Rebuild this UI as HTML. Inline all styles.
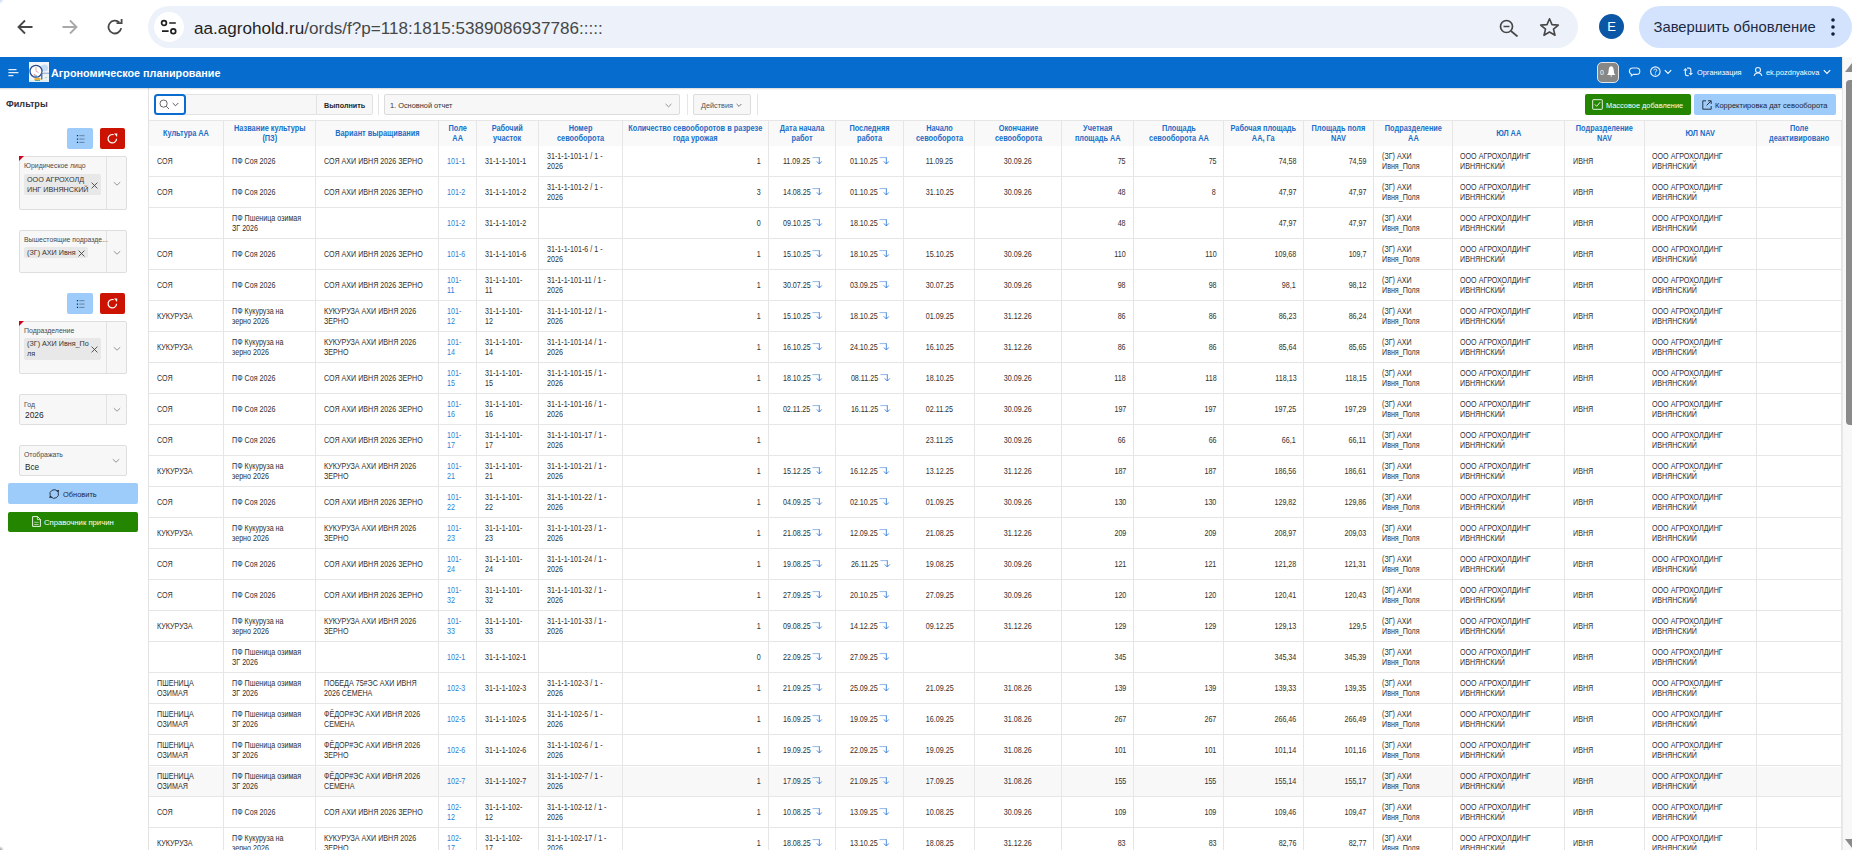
<!DOCTYPE html>
<html><head><meta charset="utf-8"><title>Агрономическое планирование</title>
<style>
*{box-sizing:border-box;margin:0;padding:0}
html,body{width:1852px;height:850px;overflow:hidden;background:#fff;font-family:"Liberation Sans",sans-serif;color:#262626;position:relative}
.abs{position:absolute}
/* browser chrome */
#chrome{position:absolute;left:0;top:0;width:1852px;height:57px;background:#fff}
#omni{position:absolute;left:148px;top:6px;width:1430px;height:42px;border-radius:21px;background:#ecf1fa}
#site{position:absolute;left:154px;top:12px;width:30px;height:30px;border-radius:15px;background:#fff}
#url{position:absolute;left:194px;top:18.3px;font-size:17.1px;line-height:22px;color:#474747;white-space:nowrap}
#url b{font-weight:400;color:#1f1f1f}
#prof{position:absolute;left:1599px;top:14px;width:25px;height:25px;border-radius:13px;background:#0b57a6;color:#fff;font-size:13px;line-height:25px;text-align:center}
#upd{position:absolute;left:1639px;top:6px;width:213px;height:42px;border-radius:21px;background:#d3e3fd}
#updt{position:absolute;left:1653.5px;top:16px;font-size:14.8px;line-height:22px;color:#1b2a45;white-space:nowrap}
/* apex header */
#hdr{position:absolute;left:0;top:57px;width:1842px;height:31px;background:#066ccd}
#title{position:absolute;left:51px;top:66px;font-size:10.8px;font-weight:700;color:#fff;line-height:14px;white-space:nowrap}
.hw{color:#fff;font-size:7.4px;line-height:10px;position:absolute;white-space:nowrap}
/* scrollbar */
#sb{position:absolute;left:1842px;top:57px;width:10px;height:793px;background:#f8f8f8;border-left:1px solid #e8e8e8}
/* left panel */
#lp{position:absolute;left:0;top:88px;width:148.8px;height:762px;background:#fff;border-right:1.5px solid #e2e2e2}
.ftl{position:absolute;left:6px;top:98px;font-size:9.1px;font-weight:700;color:#33303a;line-height:12px}
.btnb{position:absolute;width:26px;height:21px;background:#9dcbfa;border-radius:2px}
.btnr{position:absolute;width:25px;height:21px;background:#cc1200;border-radius:2px}
.sel{position:absolute;left:19px;width:107.5px;background:#f7f7f7;border:1px solid #dedede;border-radius:2px}
.sel .dv{position:absolute;left:86px;top:0;bottom:0;width:1px;background:#e2e2e2}
.lbl{position:absolute;left:4px;margin-top:-0.3px;font-size:6.9px;line-height:8px;color:#4a4a4a;white-space:nowrap}
.chip{position:absolute;left:4px;background:#e8e8e8;border-radius:2px;font-size:7.2px;line-height:9.5px;color:#333;padding:1px 3px;white-space:nowrap}
.req{position:absolute;left:-1px;top:-1px;width:0;height:0;border-top:5px solid #d0011b;border-right:5px solid transparent}
/* main toolbar */
#tb{position:absolute;left:149px;top:88px;width:1693px;height:33px;background:#fff;border-bottom:1px solid #e6e6e6}
/* table */
.thbg{position:absolute;background:#f9f9f9}
.hov{position:absolute;background:#f8f8f8}
.hl{position:absolute;left:149px;width:1692.5px;height:1px;background:#e6e6e6}
.vl{position:absolute;top:121px;width:1px;height:729px;background:#e6e6e6}
.th{position:absolute;display:flex;align-items:center;justify-content:center;text-align:center;font-size:8.6px;line-height:10px;font-weight:700;color:#1a6ec8;padding:0;white-space:nowrap}
.th .t{display:inline-block;transform:scaleX(0.855);transform-origin:center center;position:relative;top:-0.2px}
.td{position:absolute;height:31px;display:flex;align-items:center;font-size:8.6px;line-height:10px;color:#303030;padding:0 8px;white-space:nowrap}
.td .t{display:inline-block;transform:scaleX(0.83);transform-origin:left center;position:relative;top:-0.3px}
.td.r{justify-content:flex-end;text-align:right;padding-right:7.4px}
.td.r .t{transform-origin:right center}
.td.c{justify-content:center;text-align:center}
.td.c .t{transform-origin:center center}
.lnk{color:#2f7fd3}
.ar{margin-left:2px;margin-right:-2px;vertical-align:middle;position:relative;top:-1px}
</style></head>
<body>
<div id="chrome">
<svg class="abs" style="left:17px;top:19px" width="16" height="16" viewBox="0 0 16 16"><path d="M15.5 8H1.8M8 1.5L1.5 8L8 14.5" fill="none" stroke="#474747" stroke-width="1.8"/></svg>
<svg class="abs" style="left:62px;top:19px" width="16" height="16" viewBox="0 0 16 16"><path d="M0.5 8H14.2M8 1.5L14.5 8L8 14.5" fill="none" stroke="#a8a8a8" stroke-width="1.8"/></svg>
<svg class="abs" style="left:107px;top:19px" width="17" height="16" viewBox="0 0 17 16"><path d="M14.2 9.2A6.4 6.4 0 1 1 12.3 3.4" fill="none" stroke="#474747" stroke-width="1.8"/><path d="M9.5 4.2H14.6V-0.5" fill="none" stroke="#474747" stroke-width="1.8"/></svg>
<div id="omni"></div><div id="site"></div>
<svg class="abs" style="left:159px;top:17px" width="18" height="18" viewBox="0 0 18 18"><circle cx="5" cy="6" r="2.4" fill="none" stroke="#1f1f1f" stroke-width="1.7"/><path d="M10.2 6H16.8M3 14.2H9.6" stroke="#1f1f1f" stroke-width="1.7"/><circle cx="14.3" cy="14.2" r="2.4" fill="none" stroke="#1f1f1f" stroke-width="1.7"/></svg>
<div id="url"><b>aa.agrohold.ru</b>/ords/f?p=118:1815:5389086937786:::::</div>
<svg class="abs" style="left:1499px;top:19px" width="20" height="18" viewBox="0 0 20 18"><circle cx="7.5" cy="7.5" r="6" fill="none" stroke="#474747" stroke-width="1.7"/><path d="M4.5 7.5H10.5M12 12L18.5 17.5" stroke="#474747" stroke-width="1.7"/></svg>
<svg class="abs" style="left:1539px;top:17px" width="21" height="20" viewBox="0 0 21 20"><path d="M10.5 1.8L13 7.6L19.3 8.1L14.5 12.2L16 18.3L10.5 15L5 18.3L6.5 12.2L1.7 8.1L8 7.6Z" fill="none" stroke="#474747" stroke-width="1.6" stroke-linejoin="round"/></svg>
<div id="prof">E</div><div id="upd"></div><div id="updt">Завершить обновление</div>
<svg class="abs" style="left:1829px;top:17px" width="8" height="20" viewBox="0 0 8 20"><circle cx="4" cy="3" r="1.8" fill="#0f1f3d"/><circle cx="4" cy="10" r="1.8" fill="#0f1f3d"/><circle cx="4" cy="17" r="1.8" fill="#0f1f3d"/></svg>
</div>
<div id="hdr"></div>
<svg class="abs" style="left:7.5px;top:68px" width="12" height="10" viewBox="0 0 12 10"><path d="M0.4 1.6H8.5M0.4 4.6H10.4M0.4 7.6H5.4" stroke="#e4eefa" stroke-width="1.1"/></svg>
<svg class="abs" style="left:29px;top:62px" width="20" height="20" viewBox="0 0 20 20"><rect width="20" height="20" fill="#f3f7fc"/><circle cx="15.5" cy="6" r="3.6" fill="#c5dcf5"/><rect x="0" y="18" width="20" height="2" fill="#e2ecf4"/><circle cx="7" cy="9.3" r="6" fill="#fff" stroke="#2b4f8c" stroke-width="1.3"/><path d="M7 5V9.3L9.5 10.5" fill="none" stroke="#d9848a" stroke-width="0.7"/><rect x="12.5" y="10.8" width="7.5" height="7.2" fill="#eef3f8"/><path d="M12.5 11.2H20" stroke="#6f8db3" stroke-width="0.8"/><path d="M12.8 11V17.5" stroke="#2b4f8c" stroke-width="1.1"/><path d="M16 16.5L17 15L18 15.8" stroke="#8ec07a" stroke-width="0.6" fill="none"/><ellipse cx="8.5" cy="17.2" rx="3.2" ry="1.6" fill="#e3b23a"/><circle cx="7" cy="14.5" r="1.2" fill="#5b8fd6"/><circle cx="5.5" cy="12.8" r="0.9" fill="#e58f8f"/><path d="M6 18.5H11" stroke="#3aa6a0" stroke-width="0.8"/></svg>
<div id="title">Агрономическое планирование</div>
<div class="abs" style="left:1597px;top:62px;width:22px;height:21px;border-radius:5px;background:#878787;border:1.3px solid #e6e6e6"></div>
<div class="hw" style="left:1600px;top:68px;font-size:7px">0</div>
<svg class="abs" style="left:1606px;top:66px" width="10" height="12" viewBox="0 0 10 12"><path d="M5.2 0.3C6.8 0.3 7.5 1.8 7.7 4L8.1 7.2L9.4 8.9H1L2.3 7.2L2.7 4C2.9 1.8 3.6 0.3 5.2 0.3Z" fill="#fff"/><path d="M5.2 8.8V10.9" stroke="#fff" stroke-width="0.8"/></svg>
<svg class="abs" style="left:1628px;top:67px" width="13" height="10" viewBox="0 0 13 10"><path d="M4.5 1H8.6A3.2 3.2 0 0 1 8.6 7.4H5.2L3.2 9L3.5 7.2A3.2 3.2 0 0 1 4.5 1Z" fill="none" stroke="#e3eefa" stroke-width="1.1" stroke-linejoin="round"/></svg>
<svg class="abs" style="left:1649px;top:66px" width="12" height="12" viewBox="0 0 12 12"><circle cx="6.35" cy="5.6" r="4.75" fill="none" stroke="#e8f1fb" stroke-width="1.1"/><path d="M4.8 4.4C4.8 3.5 5.5 3 6.3 3C7.2 3 7.8 3.5 7.8 4.3C7.8 5.3 6.4 5.4 6.4 6.6" fill="none" stroke="#e8f1fb" stroke-width="1"/><circle cx="6.4" cy="8.1" r="0.65" fill="#e8f1fb"/></svg>
<svg class="abs" style="left:1664px;top:69px" width="8" height="6" viewBox="0 0 8 6"><path d="M0.8 1.2L4 4.4L7.2 1.2" fill="none" stroke="#fff" stroke-width="1.1"/></svg>
<svg class="abs" style="left:1682px;top:67px" width="12" height="10" viewBox="0 0 12 10"><path d="M3.4 2.2V7Q3.4 8.6 5 8.6H6.7M5 1.2H7.2Q8.8 1.2 8.8 2.8V6.4" fill="none" stroke="#dce9f8" stroke-width="1.2"/><path d="M1.2 3.6H5.6L3.4 1.1Z M6.6 5.9H11L8.8 8.4Z" fill="#dce9f8"/></svg>
<div class="hw" style="left:1697px;top:68px">Организация</div>
<svg class="abs" style="left:1753px;top:66px" width="10" height="12" viewBox="0 0 10 12"><circle cx="5" cy="4" r="2.5" fill="none" stroke="#e6effa" stroke-width="1.1"/><path d="M1.2 10C1.6 7.9 3 6.9 5 6.9C7 6.9 8.4 7.9 8.8 10" fill="none" stroke="#e6effa" stroke-width="1.1"/></svg>
<div class="hw" style="left:1766px;top:68px">ek.pozdnyakova</div>
<svg class="abs" style="left:1823px;top:69px" width="8" height="6" viewBox="0 0 8 6"><path d="M0.8 1.2L4 4.4L7.2 1.2" fill="none" stroke="#fff" stroke-width="1.1"/></svg>
<div id="sb"></div>
<svg class="abs" style="left:1844px;top:62px" width="8" height="11" viewBox="0 0 8 11"><path d="M1 10L8 1V10Z" fill="#8a8a8a"/></svg>
<div class="abs" style="left:1846px;top:80px;width:10px;height:345px;background:#8a8a8a;border-radius:4px"></div>
<svg class="abs" style="left:1844px;top:838px" width="8" height="11" viewBox="0 0 8 11"><path d="M1 1L8 10V1Z" fill="#8a8a8a"/></svg>
<div id="lp"></div>
<div class="ftl">Фильтры</div>
<div class="btnb" style="left:67px;top:128px"><svg class="abs" style="left:8.5px;top:6px" width="10" height="10" viewBox="0 0 10 10"><path d="M0.9 1.7H2.1M0.9 5.05H2.1M0.9 8.4H2.1" stroke="#1b2636" stroke-width="1.3"/><path d="M3.3 1.7H8.5M3.3 5.05H8.5M3.3 8.4H8.5" stroke="#5d7a99" stroke-width="0.9"/></svg></div>
<div class="btnr" style="left:100px;top:128px"><svg class="abs" style="left:7px;top:5px" width="11" height="11" viewBox="0 0 11 11"><path d="M9.5 5.7A4.2 4.2 0 1 1 6.74 1.75" fill="none" stroke="#fff" stroke-width="1.2"/><path d="M7.0 0.6L10.3 0.5L10.1 3.9Z" fill="#fff"/></svg></div>
<div class="btnb" style="left:67px;top:293px"><svg class="abs" style="left:8.5px;top:6px" width="10" height="10" viewBox="0 0 10 10"><path d="M0.9 1.7H2.1M0.9 5.05H2.1M0.9 8.4H2.1" stroke="#1b2636" stroke-width="1.3"/><path d="M3.3 1.7H8.5M3.3 5.05H8.5M3.3 8.4H8.5" stroke="#5d7a99" stroke-width="0.9"/></svg></div>
<div class="btnr" style="left:100px;top:293px"><svg class="abs" style="left:7px;top:5px" width="11" height="11" viewBox="0 0 11 11"><path d="M9.5 5.7A4.2 4.2 0 1 1 6.74 1.75" fill="none" stroke="#fff" stroke-width="1.2"/><path d="M7.0 0.6L10.3 0.5L10.1 3.9Z" fill="#fff"/></svg></div>
<div class="sel" style="top:156px;height:54px"><div class="dv"></div><div class="req"></div><div class="lbl" style="top:5px">Юридическое лицо</div><div class="chip" style="top:17px;width:77px;height:21px;padding:0.8px 3px;line-height:9.8px">ООО АГРОХОЛД<br>ИНГ ИВНЯНСКИЙ<svg style="position:absolute;right:3.5px;top:7.5px" width="7" height="7" viewBox="0 0 7 7"><path d="M0.6 0.6L6.4 6.4M6.4 0.6L0.6 6.4" stroke="#444" stroke-width="0.9"/></svg></div><svg class="abs" style="left:92.5px;top:24px" width="8" height="6" viewBox="0 0 8 6"><path d="M0.8 1.2L4 4.2L7.2 1.2" fill="none" stroke="#8a8a8a" stroke-width="0.9"/></svg></div>
<div class="sel" style="top:230px;height:43px"><div class="dv"></div><div class="lbl" style="top:5px">Вышестоящие подразде...</div><div class="chip" style="top:16px;width:64px;height:11px;padding:1.2px 3px 0 3px">(ЗГ) АХИ Ивня<svg style="position:absolute;right:3.5px;top:3px" width="7" height="7" viewBox="0 0 7 7"><path d="M0.6 0.6L6.4 6.4M6.4 0.6L0.6 6.4" stroke="#444" stroke-width="0.9"/></svg></div><svg class="abs" style="left:92.5px;top:19px" width="8" height="6" viewBox="0 0 8 6"><path d="M0.8 1.2L4 4.2L7.2 1.2" fill="none" stroke="#8a8a8a" stroke-width="0.9"/></svg></div>
<div class="sel" style="top:321px;height:53px"><div class="dv"></div><div class="req"></div><div class="lbl" style="top:5px">Подразделение</div><div class="chip" style="top:16px;width:77px;height:22px;padding:1.2px 3px;line-height:10px">(ЗГ) АХИ Ивня_По<br>ля<svg style="position:absolute;right:3.5px;top:7.5px" width="7" height="7" viewBox="0 0 7 7"><path d="M0.6 0.6L6.4 6.4M6.4 0.6L0.6 6.4" stroke="#444" stroke-width="0.9"/></svg></div><svg class="abs" style="left:92.5px;top:24px" width="8" height="6" viewBox="0 0 8 6"><path d="M0.8 1.2L4 4.2L7.2 1.2" fill="none" stroke="#8a8a8a" stroke-width="0.9"/></svg></div>
<div class="sel" style="top:394px;height:31px"><div class="dv"></div><div class="lbl" style="top:6px">Год</div><div class="abs" style="left:5px;top:15px;font-size:8.4px;line-height:10px;color:#262626">2026</div><svg class="abs" style="left:92.5px;top:12px" width="8" height="6" viewBox="0 0 8 6"><path d="M0.8 1.2L4 4.2L7.2 1.2" fill="none" stroke="#8a8a8a" stroke-width="0.9"/></svg></div>
<div class="sel" style="top:445px;height:31px"><div class="lbl" style="top:5px">Отображать</div><div class="abs" style="left:5px;top:16.5px;font-size:8.2px;line-height:10px;color:#262626">Все</div><svg class="abs" style="left:91.5px;top:12px" width="8" height="6" viewBox="0 0 8 6"><path d="M0.8 1.2L4 4.2L7.2 1.2" fill="none" stroke="#8a8a8a" stroke-width="0.9"/></svg></div>
<div class="abs" style="left:8px;top:483px;width:130px;height:21px;background:#9dcbfa;border-radius:2px"></div>
<svg class="abs" style="left:49px;top:488.5px" width="11" height="11" viewBox="0 0 11 11"><path d="M1.16 6.47A4.3 4.3 0 0 1 8.49 2.24M9.24 3.53A4.3 4.3 0 0 1 1.91 7.76" fill="none" stroke="#1d2733" stroke-width="0.9"/><path d="M7.3 1.5L10.1 1.1L9.4 3.9Z M3.1 8.5L0.3 8.9L1.0 6.1Z" fill="#1d2733"/></svg>
<div class="abs" style="left:63px;top:489.8px;font-size:7.45px;line-height:10px;color:#1d2733;white-space:nowrap">Обновить</div>
<div class="abs" style="left:8px;top:512px;width:130px;height:20px;background:#238500;border-radius:2px"></div>
<svg class="abs" style="left:31.5px;top:516px" width="9" height="11" viewBox="0 0 9 11"><path d="M0.6 0.6H5.6L8.4 3.4V10.4H0.6Z" fill="none" stroke="#fff" stroke-width="0.9"/><path d="M5.4 0.6V3.6H8.4" fill="none" stroke="#fff" stroke-width="0.7"/><path d="M2.2 6.3H6.6M2.2 8.5H6.6" fill="none" stroke="#fff" stroke-width="0.6"/></svg>
<div class="abs" style="left:44px;top:518px;font-size:7.7px;line-height:10px;color:#fff;white-space:nowrap">Справочник причин</div>
<div id="tb"></div>
<div class="abs" style="left:185px;top:94px;width:132px;height:20.8px;background:#f7f7f7;border:1px solid #e2e2e2;border-left:none"></div>
<div class="abs" style="left:316px;top:94px;width:57px;height:20.8px;background:#f7f7f7;border:1px solid #e2e2e2;border-radius:0 2px 2px 0"></div>
<div class="abs" style="left:324px;top:100.7px;font-size:7.2px;font-weight:700;line-height:10px;color:#262626;white-space:nowrap">Выполнить</div>
<div class="abs" style="left:154px;top:94.3px;width:32px;height:21px;background:#fff;border:2px solid #0b6cd0;border-radius:3.5px"></div>
<svg class="abs" style="left:159px;top:99px" width="11" height="11" viewBox="0 0 11 11"><circle cx="4.6" cy="4.6" r="3.6" fill="none" stroke="#555" stroke-width="0.9"/><path d="M7.2 7.2L10 10" stroke="#555" stroke-width="0.9"/></svg>
<svg class="abs" style="left:171.5px;top:102px" width="7" height="5" viewBox="0 0 7 5"><path d="M0.7 1L3.5 3.8L6.3 1" fill="none" stroke="#444" stroke-width="0.9"/></svg>
<div class="abs" style="left:378px;top:94px;width:1px;height:21px;background:#e6e6e6"></div>
<div class="abs" style="left:687px;top:94px;width:1px;height:21px;background:#e6e6e6"></div>
<div class="abs" style="left:756.5px;top:94px;width:1px;height:21px;background:#e6e6e6"></div>
<div class="abs" style="left:384px;top:94px;width:295.5px;height:20.8px;background:#f7f7f7;border:1px solid #dcdcdc;border-radius:2px"></div>
<div class="abs" style="left:390px;top:100.7px;font-size:7.38px;line-height:10px;color:#333;white-space:nowrap">1. Основной отчет</div>
<svg class="abs" style="left:665px;top:103px" width="7" height="5" viewBox="0 0 7 5"><path d="M0.6 1L3.5 3.8L6.4 1" fill="none" stroke="#777" stroke-width="0.8"/></svg>
<div class="abs" style="left:693px;top:94px;width:58px;height:20.8px;background:#f7f7f7;border:1px solid #dcdcdc;border-radius:2px"></div>
<div class="abs" style="left:701px;top:100.7px;font-size:7.3px;line-height:10px;color:#555;white-space:nowrap">Действия</div>
<svg class="abs" style="left:735.5px;top:103px" width="6" height="5" viewBox="0 0 6 5"><path d="M0.6 1L3 3.4L5.4 1" fill="none" stroke="#555" stroke-width="0.8"/></svg>
<div class="abs" style="left:1585px;top:94px;width:106px;height:21px;background:#238500;border-radius:2px"></div>
<svg class="abs" style="left:1592px;top:99px" width="11" height="11" viewBox="0 0 11 11"><rect x="0.7" y="0.7" width="9.6" height="9.6" rx="0.5" fill="none" stroke="#fff" stroke-width="0.9"/><path d="M2.8 5.4L4.7 7.3L8.2 3.2" fill="none" stroke="#fff" stroke-width="0.9"/></svg>
<div class="abs" style="left:1606px;top:100.8px;font-size:7.4px;line-height:10px;color:#fff;white-space:nowrap">Массовое добавление</div>
<div class="abs" style="left:1694px;top:94px;width:142px;height:21px;background:#9dcbfa;border-radius:2px"></div>
<svg class="abs" style="left:1702px;top:100px" width="10" height="10" viewBox="0 0 10 10"><path d="M4 0.8H0.8V9.2H9.2V6" fill="none" stroke="#1d2733" stroke-width="0.9"/><path d="M4.6 5.4L9 1M6 0.8H9.2V4" fill="none" stroke="#1d2733" stroke-width="0.9"/></svg>
<div class="abs" style="left:1715px;top:100.8px;font-size:7.53px;line-height:10px;color:#1d2733;white-space:nowrap">Корректировка дат севооборота</div>
<div class="thbg" style="left:149px;top:120.5px;width:1692.5px;height:25.5px"></div>
<div class="hov" style="left:149px;top:766.5px;width:1692.5px;height:30.5px"></div>
<div class="hl" style="top:176.0px"></div>
<div class="hl" style="top:207.0px"></div>
<div class="hl" style="top:238.0px"></div>
<div class="hl" style="top:269.0px"></div>
<div class="hl" style="top:300.0px"></div>
<div class="hl" style="top:331.0px"></div>
<div class="hl" style="top:362.0px"></div>
<div class="hl" style="top:393.0px"></div>
<div class="hl" style="top:424.0px"></div>
<div class="hl" style="top:455.0px"></div>
<div class="hl" style="top:486.0px"></div>
<div class="hl" style="top:517.0px"></div>
<div class="hl" style="top:548.0px"></div>
<div class="hl" style="top:579.0px"></div>
<div class="hl" style="top:610.0px"></div>
<div class="hl" style="top:641.0px"></div>
<div class="hl" style="top:672.0px"></div>
<div class="hl" style="top:703.0px"></div>
<div class="hl" style="top:734.0px"></div>
<div class="hl" style="top:765.0px"></div>
<div class="hl" style="top:796.0px"></div>
<div class="hl" style="top:827.0px"></div>
<div class="hl" style="top:858.0px"></div>
<div class="vl" style="left:223px"></div>
<div class="vl" style="left:315px"></div>
<div class="vl" style="left:438px"></div>
<div class="vl" style="left:476px"></div>
<div class="vl" style="left:538px"></div>
<div class="vl" style="left:622px"></div>
<div class="vl" style="left:768px"></div>
<div class="vl" style="left:835px"></div>
<div class="vl" style="left:903px"></div>
<div class="vl" style="left:974px"></div>
<div class="vl" style="left:1061px"></div>
<div class="vl" style="left:1133px"></div>
<div class="vl" style="left:1223px"></div>
<div class="vl" style="left:1303px"></div>
<div class="vl" style="left:1373px"></div>
<div class="vl" style="left:1452px"></div>
<div class="vl" style="left:1564px"></div>
<div class="vl" style="left:1644px"></div>
<div class="vl" style="left:1756px"></div>
<div class="vl" style="left:1841px"></div>
<div class="th" style="left:149px;width:74.5px;top:120.5px;height:25.5px"><span class="t">Культура АА</span></div>
<div class="th" style="left:223.5px;width:92.0px;top:120.5px;height:25.5px"><span class="t">Название культуры<br>(ПЗ)</span></div>
<div class="th" style="left:315.5px;width:123.0px;top:120.5px;height:25.5px"><span class="t">Вариант выращивания</span></div>
<div class="th" style="left:438.5px;width:38.0px;top:120.5px;height:25.5px"><span class="t">Поле<br>АА</span></div>
<div class="th" style="left:476.5px;width:62.0px;top:120.5px;height:25.5px"><span class="t">Рабочий<br>участок</span></div>
<div class="th" style="left:538.5px;width:83.79999999999995px;top:120.5px;height:25.5px"><span class="t">Номер<br>севооборота</span></div>
<div class="th" style="left:622.3px;width:146.10000000000002px;top:120.5px;height:25.5px"><span class="t">Количество севооборотов в разрезе<br>года урожая</span></div>
<div class="th" style="left:768.4px;width:67.0px;top:120.5px;height:25.5px"><span class="t">Дата начала<br>работ</span></div>
<div class="th" style="left:835.4px;width:68.10000000000002px;top:120.5px;height:25.5px"><span class="t">Последняя<br>работа</span></div>
<div class="th" style="left:903.5px;width:71.5px;top:120.5px;height:25.5px"><span class="t">Начало<br>севооборота</span></div>
<div class="th" style="left:975px;width:86.20000000000005px;top:120.5px;height:25.5px"><span class="t">Окончание<br>севооборота</span></div>
<div class="th" style="left:1061.2px;width:72.09999999999991px;top:120.5px;height:25.5px"><span class="t">Учетная<br>площадь АА</span></div>
<div class="th" style="left:1133.3px;width:90.29999999999995px;top:120.5px;height:25.5px"><span class="t">Площадь<br>севооборота АА</span></div>
<div class="th" style="left:1223.6px;width:80.0px;top:120.5px;height:25.5px"><span class="t">Рабочая площадь<br>АА, Га</span></div>
<div class="th" style="left:1303.6px;width:70.10000000000014px;top:120.5px;height:25.5px"><span class="t">Площадь поля<br>NAV</span></div>
<div class="th" style="left:1373.7px;width:78.59999999999991px;top:120.5px;height:25.5px"><span class="t">Подразделение<br>АА</span></div>
<div class="th" style="left:1452.3px;width:112.20000000000005px;top:120.5px;height:25.5px"><span class="t">ЮЛ АА</span></div>
<div class="th" style="left:1564.5px;width:79.79999999999995px;top:120.5px;height:25.5px"><span class="t">Подразделение<br>NAV</span></div>
<div class="th" style="left:1644.3px;width:112.10000000000014px;top:120.5px;height:25.5px"><span class="t">ЮЛ NAV</span></div>
<div class="th" style="left:1756.4px;width:85.09999999999991px;top:120.5px;height:25.5px"><span class="t">Поле<br>деактивировано</span></div>
<div class="td l" style="left:149px;width:74.5px;top:146.0px"><span class="t">СОЯ</span></div>
<div class="td l" style="left:223.5px;width:92.0px;top:146.0px"><span class="t">ПФ Соя 2026</span></div>
<div class="td l" style="left:315.5px;width:123.0px;top:146.0px"><span class="t">СОЯ АХИ ИВНЯ 2026 ЗЕРНО</span></div>
<div class="td l" style="left:438.5px;width:38.0px;top:146.0px"><span class="t"><span class="lnk">101-1</span></span></div>
<div class="td l" style="left:476.5px;width:62.0px;top:146.0px"><span class="t">31-1-1-101-1</span></div>
<div class="td l" style="left:538.5px;width:83.79999999999995px;top:146.0px"><span class="t">31-1-1-101-1 / 1 -<br>2026</span></div>
<div class="td r" style="left:622.3px;width:146.10000000000002px;top:146.0px"><span class="t">1</span></div>
<div class="td c" style="left:768.4px;width:67.0px;top:146.0px"><span class="t">11.09.25<svg class="ar" width="13" height="9" viewBox="0 0 11 9" preserveAspectRatio="none"><path d="M0.5 1.6H7.5" fill="none" stroke="#6a9ee0" stroke-width="0.75"/><path d="M7.5 1.3V8M4.9 5.4L7.5 8L10.1 5.4" fill="none" stroke="#3a80d8" stroke-width="0.9"/></svg></span></div>
<div class="td c" style="left:835.4px;width:68.10000000000002px;top:146.0px"><span class="t">01.10.25<svg class="ar" width="13" height="9" viewBox="0 0 11 9" preserveAspectRatio="none"><path d="M0.5 1.6H7.5" fill="none" stroke="#6a9ee0" stroke-width="0.75"/><path d="M7.5 1.3V8M4.9 5.4L7.5 8L10.1 5.4" fill="none" stroke="#3a80d8" stroke-width="0.9"/></svg></span></div>
<div class="td c" style="left:903.5px;width:71.5px;top:146.0px"><span class="t">11.09.25</span></div>
<div class="td c" style="left:975px;width:86.20000000000005px;top:146.0px"><span class="t">30.09.26</span></div>
<div class="td r" style="left:1061.2px;width:72.09999999999991px;top:146.0px"><span class="t">75</span></div>
<div class="td r" style="left:1133.3px;width:90.29999999999995px;top:146.0px"><span class="t">75</span></div>
<div class="td r" style="left:1223.6px;width:80.0px;top:146.0px"><span class="t">74,58</span></div>
<div class="td r" style="left:1303.6px;width:70.10000000000014px;top:146.0px"><span class="t">74,59</span></div>
<div class="td l" style="left:1373.7px;width:78.59999999999991px;top:146.0px"><span class="t">(ЗГ) АХИ<br>Ивня_Поля</span></div>
<div class="td l" style="left:1452.3px;width:112.20000000000005px;top:146.0px"><span class="t">ООО АГРОХОЛДИНГ<br>ИВНЯНСКИЙ</span></div>
<div class="td l" style="left:1564.5px;width:79.79999999999995px;top:146.0px"><span class="t">ИВНЯ</span></div>
<div class="td l" style="left:1644.3px;width:112.10000000000014px;top:146.0px"><span class="t">ООО АГРОХОЛДИНГ<br>ИВНЯНСКИЙ</span></div>
<div class="td l" style="left:149px;width:74.5px;top:177.0px"><span class="t">СОЯ</span></div>
<div class="td l" style="left:223.5px;width:92.0px;top:177.0px"><span class="t">ПФ Соя 2026</span></div>
<div class="td l" style="left:315.5px;width:123.0px;top:177.0px"><span class="t">СОЯ АХИ ИВНЯ 2026 ЗЕРНО</span></div>
<div class="td l" style="left:438.5px;width:38.0px;top:177.0px"><span class="t"><span class="lnk">101-2</span></span></div>
<div class="td l" style="left:476.5px;width:62.0px;top:177.0px"><span class="t">31-1-1-101-2</span></div>
<div class="td l" style="left:538.5px;width:83.79999999999995px;top:177.0px"><span class="t">31-1-1-101-2 / 1 -<br>2026</span></div>
<div class="td r" style="left:622.3px;width:146.10000000000002px;top:177.0px"><span class="t">3</span></div>
<div class="td c" style="left:768.4px;width:67.0px;top:177.0px"><span class="t">14.08.25<svg class="ar" width="13" height="9" viewBox="0 0 11 9" preserveAspectRatio="none"><path d="M0.5 1.6H7.5" fill="none" stroke="#6a9ee0" stroke-width="0.75"/><path d="M7.5 1.3V8M4.9 5.4L7.5 8L10.1 5.4" fill="none" stroke="#3a80d8" stroke-width="0.9"/></svg></span></div>
<div class="td c" style="left:835.4px;width:68.10000000000002px;top:177.0px"><span class="t">01.10.25<svg class="ar" width="13" height="9" viewBox="0 0 11 9" preserveAspectRatio="none"><path d="M0.5 1.6H7.5" fill="none" stroke="#6a9ee0" stroke-width="0.75"/><path d="M7.5 1.3V8M4.9 5.4L7.5 8L10.1 5.4" fill="none" stroke="#3a80d8" stroke-width="0.9"/></svg></span></div>
<div class="td c" style="left:903.5px;width:71.5px;top:177.0px"><span class="t">31.10.25</span></div>
<div class="td c" style="left:975px;width:86.20000000000005px;top:177.0px"><span class="t">30.09.26</span></div>
<div class="td r" style="left:1061.2px;width:72.09999999999991px;top:177.0px"><span class="t">48</span></div>
<div class="td r" style="left:1133.3px;width:90.29999999999995px;top:177.0px"><span class="t">8</span></div>
<div class="td r" style="left:1223.6px;width:80.0px;top:177.0px"><span class="t">47,97</span></div>
<div class="td r" style="left:1303.6px;width:70.10000000000014px;top:177.0px"><span class="t">47,97</span></div>
<div class="td l" style="left:1373.7px;width:78.59999999999991px;top:177.0px"><span class="t">(ЗГ) АХИ<br>Ивня_Поля</span></div>
<div class="td l" style="left:1452.3px;width:112.20000000000005px;top:177.0px"><span class="t">ООО АГРОХОЛДИНГ<br>ИВНЯНСКИЙ</span></div>
<div class="td l" style="left:1564.5px;width:79.79999999999995px;top:177.0px"><span class="t">ИВНЯ</span></div>
<div class="td l" style="left:1644.3px;width:112.10000000000014px;top:177.0px"><span class="t">ООО АГРОХОЛДИНГ<br>ИВНЯНСКИЙ</span></div>
<div class="td l" style="left:223.5px;width:92.0px;top:208.0px"><span class="t">ПФ Пшеница озимая<br>ЗГ 2026</span></div>
<div class="td l" style="left:438.5px;width:38.0px;top:208.0px"><span class="t"><span class="lnk">101-2</span></span></div>
<div class="td l" style="left:476.5px;width:62.0px;top:208.0px"><span class="t">31-1-1-101-2</span></div>
<div class="td r" style="left:622.3px;width:146.10000000000002px;top:208.0px"><span class="t">0</span></div>
<div class="td c" style="left:768.4px;width:67.0px;top:208.0px"><span class="t">09.10.25<svg class="ar" width="13" height="9" viewBox="0 0 11 9" preserveAspectRatio="none"><path d="M0.5 1.6H7.5" fill="none" stroke="#6a9ee0" stroke-width="0.75"/><path d="M7.5 1.3V8M4.9 5.4L7.5 8L10.1 5.4" fill="none" stroke="#3a80d8" stroke-width="0.9"/></svg></span></div>
<div class="td c" style="left:835.4px;width:68.10000000000002px;top:208.0px"><span class="t">18.10.25<svg class="ar" width="13" height="9" viewBox="0 0 11 9" preserveAspectRatio="none"><path d="M0.5 1.6H7.5" fill="none" stroke="#6a9ee0" stroke-width="0.75"/><path d="M7.5 1.3V8M4.9 5.4L7.5 8L10.1 5.4" fill="none" stroke="#3a80d8" stroke-width="0.9"/></svg></span></div>
<div class="td r" style="left:1061.2px;width:72.09999999999991px;top:208.0px"><span class="t">48</span></div>
<div class="td r" style="left:1223.6px;width:80.0px;top:208.0px"><span class="t">47,97</span></div>
<div class="td r" style="left:1303.6px;width:70.10000000000014px;top:208.0px"><span class="t">47,97</span></div>
<div class="td l" style="left:1373.7px;width:78.59999999999991px;top:208.0px"><span class="t">(ЗГ) АХИ<br>Ивня_Поля</span></div>
<div class="td l" style="left:1452.3px;width:112.20000000000005px;top:208.0px"><span class="t">ООО АГРОХОЛДИНГ<br>ИВНЯНСКИЙ</span></div>
<div class="td l" style="left:1564.5px;width:79.79999999999995px;top:208.0px"><span class="t">ИВНЯ</span></div>
<div class="td l" style="left:1644.3px;width:112.10000000000014px;top:208.0px"><span class="t">ООО АГРОХОЛДИНГ<br>ИВНЯНСКИЙ</span></div>
<div class="td l" style="left:149px;width:74.5px;top:239.0px"><span class="t">СОЯ</span></div>
<div class="td l" style="left:223.5px;width:92.0px;top:239.0px"><span class="t">ПФ Соя 2026</span></div>
<div class="td l" style="left:315.5px;width:123.0px;top:239.0px"><span class="t">СОЯ АХИ ИВНЯ 2026 ЗЕРНО</span></div>
<div class="td l" style="left:438.5px;width:38.0px;top:239.0px"><span class="t"><span class="lnk">101-6</span></span></div>
<div class="td l" style="left:476.5px;width:62.0px;top:239.0px"><span class="t">31-1-1-101-6</span></div>
<div class="td l" style="left:538.5px;width:83.79999999999995px;top:239.0px"><span class="t">31-1-1-101-6 / 1 -<br>2026</span></div>
<div class="td r" style="left:622.3px;width:146.10000000000002px;top:239.0px"><span class="t">1</span></div>
<div class="td c" style="left:768.4px;width:67.0px;top:239.0px"><span class="t">15.10.25<svg class="ar" width="13" height="9" viewBox="0 0 11 9" preserveAspectRatio="none"><path d="M0.5 1.6H7.5" fill="none" stroke="#6a9ee0" stroke-width="0.75"/><path d="M7.5 1.3V8M4.9 5.4L7.5 8L10.1 5.4" fill="none" stroke="#3a80d8" stroke-width="0.9"/></svg></span></div>
<div class="td c" style="left:835.4px;width:68.10000000000002px;top:239.0px"><span class="t">18.10.25<svg class="ar" width="13" height="9" viewBox="0 0 11 9" preserveAspectRatio="none"><path d="M0.5 1.6H7.5" fill="none" stroke="#6a9ee0" stroke-width="0.75"/><path d="M7.5 1.3V8M4.9 5.4L7.5 8L10.1 5.4" fill="none" stroke="#3a80d8" stroke-width="0.9"/></svg></span></div>
<div class="td c" style="left:903.5px;width:71.5px;top:239.0px"><span class="t">15.10.25</span></div>
<div class="td c" style="left:975px;width:86.20000000000005px;top:239.0px"><span class="t">30.09.26</span></div>
<div class="td r" style="left:1061.2px;width:72.09999999999991px;top:239.0px"><span class="t">110</span></div>
<div class="td r" style="left:1133.3px;width:90.29999999999995px;top:239.0px"><span class="t">110</span></div>
<div class="td r" style="left:1223.6px;width:80.0px;top:239.0px"><span class="t">109,68</span></div>
<div class="td r" style="left:1303.6px;width:70.10000000000014px;top:239.0px"><span class="t">109,7</span></div>
<div class="td l" style="left:1373.7px;width:78.59999999999991px;top:239.0px"><span class="t">(ЗГ) АХИ<br>Ивня_Поля</span></div>
<div class="td l" style="left:1452.3px;width:112.20000000000005px;top:239.0px"><span class="t">ООО АГРОХОЛДИНГ<br>ИВНЯНСКИЙ</span></div>
<div class="td l" style="left:1564.5px;width:79.79999999999995px;top:239.0px"><span class="t">ИВНЯ</span></div>
<div class="td l" style="left:1644.3px;width:112.10000000000014px;top:239.0px"><span class="t">ООО АГРОХОЛДИНГ<br>ИВНЯНСКИЙ</span></div>
<div class="td l" style="left:149px;width:74.5px;top:270.0px"><span class="t">СОЯ</span></div>
<div class="td l" style="left:223.5px;width:92.0px;top:270.0px"><span class="t">ПФ Соя 2026</span></div>
<div class="td l" style="left:315.5px;width:123.0px;top:270.0px"><span class="t">СОЯ АХИ ИВНЯ 2026 ЗЕРНО</span></div>
<div class="td l" style="left:438.5px;width:38.0px;top:270.0px"><span class="t"><span class="lnk">101-<br>11</span></span></div>
<div class="td l" style="left:476.5px;width:62.0px;top:270.0px"><span class="t">31-1-1-101-<br>11</span></div>
<div class="td l" style="left:538.5px;width:83.79999999999995px;top:270.0px"><span class="t">31-1-1-101-11 / 1 -<br>2026</span></div>
<div class="td r" style="left:622.3px;width:146.10000000000002px;top:270.0px"><span class="t">1</span></div>
<div class="td c" style="left:768.4px;width:67.0px;top:270.0px"><span class="t">30.07.25<svg class="ar" width="13" height="9" viewBox="0 0 11 9" preserveAspectRatio="none"><path d="M0.5 1.6H7.5" fill="none" stroke="#6a9ee0" stroke-width="0.75"/><path d="M7.5 1.3V8M4.9 5.4L7.5 8L10.1 5.4" fill="none" stroke="#3a80d8" stroke-width="0.9"/></svg></span></div>
<div class="td c" style="left:835.4px;width:68.10000000000002px;top:270.0px"><span class="t">03.09.25<svg class="ar" width="13" height="9" viewBox="0 0 11 9" preserveAspectRatio="none"><path d="M0.5 1.6H7.5" fill="none" stroke="#6a9ee0" stroke-width="0.75"/><path d="M7.5 1.3V8M4.9 5.4L7.5 8L10.1 5.4" fill="none" stroke="#3a80d8" stroke-width="0.9"/></svg></span></div>
<div class="td c" style="left:903.5px;width:71.5px;top:270.0px"><span class="t">30.07.25</span></div>
<div class="td c" style="left:975px;width:86.20000000000005px;top:270.0px"><span class="t">30.09.26</span></div>
<div class="td r" style="left:1061.2px;width:72.09999999999991px;top:270.0px"><span class="t">98</span></div>
<div class="td r" style="left:1133.3px;width:90.29999999999995px;top:270.0px"><span class="t">98</span></div>
<div class="td r" style="left:1223.6px;width:80.0px;top:270.0px"><span class="t">98,1</span></div>
<div class="td r" style="left:1303.6px;width:70.10000000000014px;top:270.0px"><span class="t">98,12</span></div>
<div class="td l" style="left:1373.7px;width:78.59999999999991px;top:270.0px"><span class="t">(ЗГ) АХИ<br>Ивня_Поля</span></div>
<div class="td l" style="left:1452.3px;width:112.20000000000005px;top:270.0px"><span class="t">ООО АГРОХОЛДИНГ<br>ИВНЯНСКИЙ</span></div>
<div class="td l" style="left:1564.5px;width:79.79999999999995px;top:270.0px"><span class="t">ИВНЯ</span></div>
<div class="td l" style="left:1644.3px;width:112.10000000000014px;top:270.0px"><span class="t">ООО АГРОХОЛДИНГ<br>ИВНЯНСКИЙ</span></div>
<div class="td l" style="left:149px;width:74.5px;top:301.0px"><span class="t">КУКУРУЗА</span></div>
<div class="td l" style="left:223.5px;width:92.0px;top:301.0px"><span class="t">ПФ Кукуруза на<br>зерно 2026</span></div>
<div class="td l" style="left:315.5px;width:123.0px;top:301.0px"><span class="t">КУКУРУЗА АХИ ИВНЯ 2026<br>ЗЕРНО</span></div>
<div class="td l" style="left:438.5px;width:38.0px;top:301.0px"><span class="t"><span class="lnk">101-<br>12</span></span></div>
<div class="td l" style="left:476.5px;width:62.0px;top:301.0px"><span class="t">31-1-1-101-<br>12</span></div>
<div class="td l" style="left:538.5px;width:83.79999999999995px;top:301.0px"><span class="t">31-1-1-101-12 / 1 -<br>2026</span></div>
<div class="td r" style="left:622.3px;width:146.10000000000002px;top:301.0px"><span class="t">1</span></div>
<div class="td c" style="left:768.4px;width:67.0px;top:301.0px"><span class="t">15.10.25<svg class="ar" width="13" height="9" viewBox="0 0 11 9" preserveAspectRatio="none"><path d="M0.5 1.6H7.5" fill="none" stroke="#6a9ee0" stroke-width="0.75"/><path d="M7.5 1.3V8M4.9 5.4L7.5 8L10.1 5.4" fill="none" stroke="#3a80d8" stroke-width="0.9"/></svg></span></div>
<div class="td c" style="left:835.4px;width:68.10000000000002px;top:301.0px"><span class="t">18.10.25<svg class="ar" width="13" height="9" viewBox="0 0 11 9" preserveAspectRatio="none"><path d="M0.5 1.6H7.5" fill="none" stroke="#6a9ee0" stroke-width="0.75"/><path d="M7.5 1.3V8M4.9 5.4L7.5 8L10.1 5.4" fill="none" stroke="#3a80d8" stroke-width="0.9"/></svg></span></div>
<div class="td c" style="left:903.5px;width:71.5px;top:301.0px"><span class="t">01.09.25</span></div>
<div class="td c" style="left:975px;width:86.20000000000005px;top:301.0px"><span class="t">31.12.26</span></div>
<div class="td r" style="left:1061.2px;width:72.09999999999991px;top:301.0px"><span class="t">86</span></div>
<div class="td r" style="left:1133.3px;width:90.29999999999995px;top:301.0px"><span class="t">86</span></div>
<div class="td r" style="left:1223.6px;width:80.0px;top:301.0px"><span class="t">86,23</span></div>
<div class="td r" style="left:1303.6px;width:70.10000000000014px;top:301.0px"><span class="t">86,24</span></div>
<div class="td l" style="left:1373.7px;width:78.59999999999991px;top:301.0px"><span class="t">(ЗГ) АХИ<br>Ивня_Поля</span></div>
<div class="td l" style="left:1452.3px;width:112.20000000000005px;top:301.0px"><span class="t">ООО АГРОХОЛДИНГ<br>ИВНЯНСКИЙ</span></div>
<div class="td l" style="left:1564.5px;width:79.79999999999995px;top:301.0px"><span class="t">ИВНЯ</span></div>
<div class="td l" style="left:1644.3px;width:112.10000000000014px;top:301.0px"><span class="t">ООО АГРОХОЛДИНГ<br>ИВНЯНСКИЙ</span></div>
<div class="td l" style="left:149px;width:74.5px;top:332.0px"><span class="t">КУКУРУЗА</span></div>
<div class="td l" style="left:223.5px;width:92.0px;top:332.0px"><span class="t">ПФ Кукуруза на<br>зерно 2026</span></div>
<div class="td l" style="left:315.5px;width:123.0px;top:332.0px"><span class="t">КУКУРУЗА АХИ ИВНЯ 2026<br>ЗЕРНО</span></div>
<div class="td l" style="left:438.5px;width:38.0px;top:332.0px"><span class="t"><span class="lnk">101-<br>14</span></span></div>
<div class="td l" style="left:476.5px;width:62.0px;top:332.0px"><span class="t">31-1-1-101-<br>14</span></div>
<div class="td l" style="left:538.5px;width:83.79999999999995px;top:332.0px"><span class="t">31-1-1-101-14 / 1 -<br>2026</span></div>
<div class="td r" style="left:622.3px;width:146.10000000000002px;top:332.0px"><span class="t">1</span></div>
<div class="td c" style="left:768.4px;width:67.0px;top:332.0px"><span class="t">16.10.25<svg class="ar" width="13" height="9" viewBox="0 0 11 9" preserveAspectRatio="none"><path d="M0.5 1.6H7.5" fill="none" stroke="#6a9ee0" stroke-width="0.75"/><path d="M7.5 1.3V8M4.9 5.4L7.5 8L10.1 5.4" fill="none" stroke="#3a80d8" stroke-width="0.9"/></svg></span></div>
<div class="td c" style="left:835.4px;width:68.10000000000002px;top:332.0px"><span class="t">24.10.25<svg class="ar" width="13" height="9" viewBox="0 0 11 9" preserveAspectRatio="none"><path d="M0.5 1.6H7.5" fill="none" stroke="#6a9ee0" stroke-width="0.75"/><path d="M7.5 1.3V8M4.9 5.4L7.5 8L10.1 5.4" fill="none" stroke="#3a80d8" stroke-width="0.9"/></svg></span></div>
<div class="td c" style="left:903.5px;width:71.5px;top:332.0px"><span class="t">16.10.25</span></div>
<div class="td c" style="left:975px;width:86.20000000000005px;top:332.0px"><span class="t">31.12.26</span></div>
<div class="td r" style="left:1061.2px;width:72.09999999999991px;top:332.0px"><span class="t">86</span></div>
<div class="td r" style="left:1133.3px;width:90.29999999999995px;top:332.0px"><span class="t">86</span></div>
<div class="td r" style="left:1223.6px;width:80.0px;top:332.0px"><span class="t">85,64</span></div>
<div class="td r" style="left:1303.6px;width:70.10000000000014px;top:332.0px"><span class="t">85,65</span></div>
<div class="td l" style="left:1373.7px;width:78.59999999999991px;top:332.0px"><span class="t">(ЗГ) АХИ<br>Ивня_Поля</span></div>
<div class="td l" style="left:1452.3px;width:112.20000000000005px;top:332.0px"><span class="t">ООО АГРОХОЛДИНГ<br>ИВНЯНСКИЙ</span></div>
<div class="td l" style="left:1564.5px;width:79.79999999999995px;top:332.0px"><span class="t">ИВНЯ</span></div>
<div class="td l" style="left:1644.3px;width:112.10000000000014px;top:332.0px"><span class="t">ООО АГРОХОЛДИНГ<br>ИВНЯНСКИЙ</span></div>
<div class="td l" style="left:149px;width:74.5px;top:363.0px"><span class="t">СОЯ</span></div>
<div class="td l" style="left:223.5px;width:92.0px;top:363.0px"><span class="t">ПФ Соя 2026</span></div>
<div class="td l" style="left:315.5px;width:123.0px;top:363.0px"><span class="t">СОЯ АХИ ИВНЯ 2026 ЗЕРНО</span></div>
<div class="td l" style="left:438.5px;width:38.0px;top:363.0px"><span class="t"><span class="lnk">101-<br>15</span></span></div>
<div class="td l" style="left:476.5px;width:62.0px;top:363.0px"><span class="t">31-1-1-101-<br>15</span></div>
<div class="td l" style="left:538.5px;width:83.79999999999995px;top:363.0px"><span class="t">31-1-1-101-15 / 1 -<br>2026</span></div>
<div class="td r" style="left:622.3px;width:146.10000000000002px;top:363.0px"><span class="t">1</span></div>
<div class="td c" style="left:768.4px;width:67.0px;top:363.0px"><span class="t">18.10.25<svg class="ar" width="13" height="9" viewBox="0 0 11 9" preserveAspectRatio="none"><path d="M0.5 1.6H7.5" fill="none" stroke="#6a9ee0" stroke-width="0.75"/><path d="M7.5 1.3V8M4.9 5.4L7.5 8L10.1 5.4" fill="none" stroke="#3a80d8" stroke-width="0.9"/></svg></span></div>
<div class="td c" style="left:835.4px;width:68.10000000000002px;top:363.0px"><span class="t">08.11.25<svg class="ar" width="13" height="9" viewBox="0 0 11 9" preserveAspectRatio="none"><path d="M0.5 1.6H7.5" fill="none" stroke="#6a9ee0" stroke-width="0.75"/><path d="M7.5 1.3V8M4.9 5.4L7.5 8L10.1 5.4" fill="none" stroke="#3a80d8" stroke-width="0.9"/></svg></span></div>
<div class="td c" style="left:903.5px;width:71.5px;top:363.0px"><span class="t">18.10.25</span></div>
<div class="td c" style="left:975px;width:86.20000000000005px;top:363.0px"><span class="t">30.09.26</span></div>
<div class="td r" style="left:1061.2px;width:72.09999999999991px;top:363.0px"><span class="t">118</span></div>
<div class="td r" style="left:1133.3px;width:90.29999999999995px;top:363.0px"><span class="t">118</span></div>
<div class="td r" style="left:1223.6px;width:80.0px;top:363.0px"><span class="t">118,13</span></div>
<div class="td r" style="left:1303.6px;width:70.10000000000014px;top:363.0px"><span class="t">118,15</span></div>
<div class="td l" style="left:1373.7px;width:78.59999999999991px;top:363.0px"><span class="t">(ЗГ) АХИ<br>Ивня_Поля</span></div>
<div class="td l" style="left:1452.3px;width:112.20000000000005px;top:363.0px"><span class="t">ООО АГРОХОЛДИНГ<br>ИВНЯНСКИЙ</span></div>
<div class="td l" style="left:1564.5px;width:79.79999999999995px;top:363.0px"><span class="t">ИВНЯ</span></div>
<div class="td l" style="left:1644.3px;width:112.10000000000014px;top:363.0px"><span class="t">ООО АГРОХОЛДИНГ<br>ИВНЯНСКИЙ</span></div>
<div class="td l" style="left:149px;width:74.5px;top:394.0px"><span class="t">СОЯ</span></div>
<div class="td l" style="left:223.5px;width:92.0px;top:394.0px"><span class="t">ПФ Соя 2026</span></div>
<div class="td l" style="left:315.5px;width:123.0px;top:394.0px"><span class="t">СОЯ АХИ ИВНЯ 2026 ЗЕРНО</span></div>
<div class="td l" style="left:438.5px;width:38.0px;top:394.0px"><span class="t"><span class="lnk">101-<br>16</span></span></div>
<div class="td l" style="left:476.5px;width:62.0px;top:394.0px"><span class="t">31-1-1-101-<br>16</span></div>
<div class="td l" style="left:538.5px;width:83.79999999999995px;top:394.0px"><span class="t">31-1-1-101-16 / 1 -<br>2026</span></div>
<div class="td r" style="left:622.3px;width:146.10000000000002px;top:394.0px"><span class="t">1</span></div>
<div class="td c" style="left:768.4px;width:67.0px;top:394.0px"><span class="t">02.11.25<svg class="ar" width="13" height="9" viewBox="0 0 11 9" preserveAspectRatio="none"><path d="M0.5 1.6H7.5" fill="none" stroke="#6a9ee0" stroke-width="0.75"/><path d="M7.5 1.3V8M4.9 5.4L7.5 8L10.1 5.4" fill="none" stroke="#3a80d8" stroke-width="0.9"/></svg></span></div>
<div class="td c" style="left:835.4px;width:68.10000000000002px;top:394.0px"><span class="t">16.11.25<svg class="ar" width="13" height="9" viewBox="0 0 11 9" preserveAspectRatio="none"><path d="M0.5 1.6H7.5" fill="none" stroke="#6a9ee0" stroke-width="0.75"/><path d="M7.5 1.3V8M4.9 5.4L7.5 8L10.1 5.4" fill="none" stroke="#3a80d8" stroke-width="0.9"/></svg></span></div>
<div class="td c" style="left:903.5px;width:71.5px;top:394.0px"><span class="t">02.11.25</span></div>
<div class="td c" style="left:975px;width:86.20000000000005px;top:394.0px"><span class="t">30.09.26</span></div>
<div class="td r" style="left:1061.2px;width:72.09999999999991px;top:394.0px"><span class="t">197</span></div>
<div class="td r" style="left:1133.3px;width:90.29999999999995px;top:394.0px"><span class="t">197</span></div>
<div class="td r" style="left:1223.6px;width:80.0px;top:394.0px"><span class="t">197,25</span></div>
<div class="td r" style="left:1303.6px;width:70.10000000000014px;top:394.0px"><span class="t">197,29</span></div>
<div class="td l" style="left:1373.7px;width:78.59999999999991px;top:394.0px"><span class="t">(ЗГ) АХИ<br>Ивня_Поля</span></div>
<div class="td l" style="left:1452.3px;width:112.20000000000005px;top:394.0px"><span class="t">ООО АГРОХОЛДИНГ<br>ИВНЯНСКИЙ</span></div>
<div class="td l" style="left:1564.5px;width:79.79999999999995px;top:394.0px"><span class="t">ИВНЯ</span></div>
<div class="td l" style="left:1644.3px;width:112.10000000000014px;top:394.0px"><span class="t">ООО АГРОХОЛДИНГ<br>ИВНЯНСКИЙ</span></div>
<div class="td l" style="left:149px;width:74.5px;top:425.0px"><span class="t">СОЯ</span></div>
<div class="td l" style="left:223.5px;width:92.0px;top:425.0px"><span class="t">ПФ Соя 2026</span></div>
<div class="td l" style="left:315.5px;width:123.0px;top:425.0px"><span class="t">СОЯ АХИ ИВНЯ 2026 ЗЕРНО</span></div>
<div class="td l" style="left:438.5px;width:38.0px;top:425.0px"><span class="t"><span class="lnk">101-<br>17</span></span></div>
<div class="td l" style="left:476.5px;width:62.0px;top:425.0px"><span class="t">31-1-1-101-<br>17</span></div>
<div class="td l" style="left:538.5px;width:83.79999999999995px;top:425.0px"><span class="t">31-1-1-101-17 / 1 -<br>2026</span></div>
<div class="td r" style="left:622.3px;width:146.10000000000002px;top:425.0px"><span class="t">1</span></div>
<div class="td c" style="left:903.5px;width:71.5px;top:425.0px"><span class="t">23.11.25</span></div>
<div class="td c" style="left:975px;width:86.20000000000005px;top:425.0px"><span class="t">30.09.26</span></div>
<div class="td r" style="left:1061.2px;width:72.09999999999991px;top:425.0px"><span class="t">66</span></div>
<div class="td r" style="left:1133.3px;width:90.29999999999995px;top:425.0px"><span class="t">66</span></div>
<div class="td r" style="left:1223.6px;width:80.0px;top:425.0px"><span class="t">66,1</span></div>
<div class="td r" style="left:1303.6px;width:70.10000000000014px;top:425.0px"><span class="t">66,11</span></div>
<div class="td l" style="left:1373.7px;width:78.59999999999991px;top:425.0px"><span class="t">(ЗГ) АХИ<br>Ивня_Поля</span></div>
<div class="td l" style="left:1452.3px;width:112.20000000000005px;top:425.0px"><span class="t">ООО АГРОХОЛДИНГ<br>ИВНЯНСКИЙ</span></div>
<div class="td l" style="left:1644.3px;width:112.10000000000014px;top:425.0px"><span class="t">ООО АГРОХОЛДИНГ<br>ИВНЯНСКИЙ</span></div>
<div class="td l" style="left:149px;width:74.5px;top:456.0px"><span class="t">КУКУРУЗА</span></div>
<div class="td l" style="left:223.5px;width:92.0px;top:456.0px"><span class="t">ПФ Кукуруза на<br>зерно 2026</span></div>
<div class="td l" style="left:315.5px;width:123.0px;top:456.0px"><span class="t">КУКУРУЗА АХИ ИВНЯ 2026<br>ЗЕРНО</span></div>
<div class="td l" style="left:438.5px;width:38.0px;top:456.0px"><span class="t"><span class="lnk">101-<br>21</span></span></div>
<div class="td l" style="left:476.5px;width:62.0px;top:456.0px"><span class="t">31-1-1-101-<br>21</span></div>
<div class="td l" style="left:538.5px;width:83.79999999999995px;top:456.0px"><span class="t">31-1-1-101-21 / 1 -<br>2026</span></div>
<div class="td r" style="left:622.3px;width:146.10000000000002px;top:456.0px"><span class="t">1</span></div>
<div class="td c" style="left:768.4px;width:67.0px;top:456.0px"><span class="t">15.12.25<svg class="ar" width="13" height="9" viewBox="0 0 11 9" preserveAspectRatio="none"><path d="M0.5 1.6H7.5" fill="none" stroke="#6a9ee0" stroke-width="0.75"/><path d="M7.5 1.3V8M4.9 5.4L7.5 8L10.1 5.4" fill="none" stroke="#3a80d8" stroke-width="0.9"/></svg></span></div>
<div class="td c" style="left:835.4px;width:68.10000000000002px;top:456.0px"><span class="t">16.12.25<svg class="ar" width="13" height="9" viewBox="0 0 11 9" preserveAspectRatio="none"><path d="M0.5 1.6H7.5" fill="none" stroke="#6a9ee0" stroke-width="0.75"/><path d="M7.5 1.3V8M4.9 5.4L7.5 8L10.1 5.4" fill="none" stroke="#3a80d8" stroke-width="0.9"/></svg></span></div>
<div class="td c" style="left:903.5px;width:71.5px;top:456.0px"><span class="t">13.12.25</span></div>
<div class="td c" style="left:975px;width:86.20000000000005px;top:456.0px"><span class="t">31.12.26</span></div>
<div class="td r" style="left:1061.2px;width:72.09999999999991px;top:456.0px"><span class="t">187</span></div>
<div class="td r" style="left:1133.3px;width:90.29999999999995px;top:456.0px"><span class="t">187</span></div>
<div class="td r" style="left:1223.6px;width:80.0px;top:456.0px"><span class="t">186,56</span></div>
<div class="td r" style="left:1303.6px;width:70.10000000000014px;top:456.0px"><span class="t">186,61</span></div>
<div class="td l" style="left:1373.7px;width:78.59999999999991px;top:456.0px"><span class="t">(ЗГ) АХИ<br>Ивня_Поля</span></div>
<div class="td l" style="left:1452.3px;width:112.20000000000005px;top:456.0px"><span class="t">ООО АГРОХОЛДИНГ<br>ИВНЯНСКИЙ</span></div>
<div class="td l" style="left:1564.5px;width:79.79999999999995px;top:456.0px"><span class="t">ИВНЯ</span></div>
<div class="td l" style="left:1644.3px;width:112.10000000000014px;top:456.0px"><span class="t">ООО АГРОХОЛДИНГ<br>ИВНЯНСКИЙ</span></div>
<div class="td l" style="left:149px;width:74.5px;top:487.0px"><span class="t">СОЯ</span></div>
<div class="td l" style="left:223.5px;width:92.0px;top:487.0px"><span class="t">ПФ Соя 2026</span></div>
<div class="td l" style="left:315.5px;width:123.0px;top:487.0px"><span class="t">СОЯ АХИ ИВНЯ 2026 ЗЕРНО</span></div>
<div class="td l" style="left:438.5px;width:38.0px;top:487.0px"><span class="t"><span class="lnk">101-<br>22</span></span></div>
<div class="td l" style="left:476.5px;width:62.0px;top:487.0px"><span class="t">31-1-1-101-<br>22</span></div>
<div class="td l" style="left:538.5px;width:83.79999999999995px;top:487.0px"><span class="t">31-1-1-101-22 / 1 -<br>2026</span></div>
<div class="td r" style="left:622.3px;width:146.10000000000002px;top:487.0px"><span class="t">1</span></div>
<div class="td c" style="left:768.4px;width:67.0px;top:487.0px"><span class="t">04.09.25<svg class="ar" width="13" height="9" viewBox="0 0 11 9" preserveAspectRatio="none"><path d="M0.5 1.6H7.5" fill="none" stroke="#6a9ee0" stroke-width="0.75"/><path d="M7.5 1.3V8M4.9 5.4L7.5 8L10.1 5.4" fill="none" stroke="#3a80d8" stroke-width="0.9"/></svg></span></div>
<div class="td c" style="left:835.4px;width:68.10000000000002px;top:487.0px"><span class="t">02.10.25<svg class="ar" width="13" height="9" viewBox="0 0 11 9" preserveAspectRatio="none"><path d="M0.5 1.6H7.5" fill="none" stroke="#6a9ee0" stroke-width="0.75"/><path d="M7.5 1.3V8M4.9 5.4L7.5 8L10.1 5.4" fill="none" stroke="#3a80d8" stroke-width="0.9"/></svg></span></div>
<div class="td c" style="left:903.5px;width:71.5px;top:487.0px"><span class="t">01.09.25</span></div>
<div class="td c" style="left:975px;width:86.20000000000005px;top:487.0px"><span class="t">30.09.26</span></div>
<div class="td r" style="left:1061.2px;width:72.09999999999991px;top:487.0px"><span class="t">130</span></div>
<div class="td r" style="left:1133.3px;width:90.29999999999995px;top:487.0px"><span class="t">130</span></div>
<div class="td r" style="left:1223.6px;width:80.0px;top:487.0px"><span class="t">129,82</span></div>
<div class="td r" style="left:1303.6px;width:70.10000000000014px;top:487.0px"><span class="t">129,86</span></div>
<div class="td l" style="left:1373.7px;width:78.59999999999991px;top:487.0px"><span class="t">(ЗГ) АХИ<br>Ивня_Поля</span></div>
<div class="td l" style="left:1452.3px;width:112.20000000000005px;top:487.0px"><span class="t">ООО АГРОХОЛДИНГ<br>ИВНЯНСКИЙ</span></div>
<div class="td l" style="left:1564.5px;width:79.79999999999995px;top:487.0px"><span class="t">ИВНЯ</span></div>
<div class="td l" style="left:1644.3px;width:112.10000000000014px;top:487.0px"><span class="t">ООО АГРОХОЛДИНГ<br>ИВНЯНСКИЙ</span></div>
<div class="td l" style="left:149px;width:74.5px;top:518.0px"><span class="t">КУКУРУЗА</span></div>
<div class="td l" style="left:223.5px;width:92.0px;top:518.0px"><span class="t">ПФ Кукуруза на<br>зерно 2026</span></div>
<div class="td l" style="left:315.5px;width:123.0px;top:518.0px"><span class="t">КУКУРУЗА АХИ ИВНЯ 2026<br>ЗЕРНО</span></div>
<div class="td l" style="left:438.5px;width:38.0px;top:518.0px"><span class="t"><span class="lnk">101-<br>23</span></span></div>
<div class="td l" style="left:476.5px;width:62.0px;top:518.0px"><span class="t">31-1-1-101-<br>23</span></div>
<div class="td l" style="left:538.5px;width:83.79999999999995px;top:518.0px"><span class="t">31-1-1-101-23 / 1 -<br>2026</span></div>
<div class="td r" style="left:622.3px;width:146.10000000000002px;top:518.0px"><span class="t">1</span></div>
<div class="td c" style="left:768.4px;width:67.0px;top:518.0px"><span class="t">21.08.25<svg class="ar" width="13" height="9" viewBox="0 0 11 9" preserveAspectRatio="none"><path d="M0.5 1.6H7.5" fill="none" stroke="#6a9ee0" stroke-width="0.75"/><path d="M7.5 1.3V8M4.9 5.4L7.5 8L10.1 5.4" fill="none" stroke="#3a80d8" stroke-width="0.9"/></svg></span></div>
<div class="td c" style="left:835.4px;width:68.10000000000002px;top:518.0px"><span class="t">12.09.25<svg class="ar" width="13" height="9" viewBox="0 0 11 9" preserveAspectRatio="none"><path d="M0.5 1.6H7.5" fill="none" stroke="#6a9ee0" stroke-width="0.75"/><path d="M7.5 1.3V8M4.9 5.4L7.5 8L10.1 5.4" fill="none" stroke="#3a80d8" stroke-width="0.9"/></svg></span></div>
<div class="td c" style="left:903.5px;width:71.5px;top:518.0px"><span class="t">21.08.25</span></div>
<div class="td c" style="left:975px;width:86.20000000000005px;top:518.0px"><span class="t">31.12.26</span></div>
<div class="td r" style="left:1061.2px;width:72.09999999999991px;top:518.0px"><span class="t">209</span></div>
<div class="td r" style="left:1133.3px;width:90.29999999999995px;top:518.0px"><span class="t">209</span></div>
<div class="td r" style="left:1223.6px;width:80.0px;top:518.0px"><span class="t">208,97</span></div>
<div class="td r" style="left:1303.6px;width:70.10000000000014px;top:518.0px"><span class="t">209,03</span></div>
<div class="td l" style="left:1373.7px;width:78.59999999999991px;top:518.0px"><span class="t">(ЗГ) АХИ<br>Ивня_Поля</span></div>
<div class="td l" style="left:1452.3px;width:112.20000000000005px;top:518.0px"><span class="t">ООО АГРОХОЛДИНГ<br>ИВНЯНСКИЙ</span></div>
<div class="td l" style="left:1564.5px;width:79.79999999999995px;top:518.0px"><span class="t">ИВНЯ</span></div>
<div class="td l" style="left:1644.3px;width:112.10000000000014px;top:518.0px"><span class="t">ООО АГРОХОЛДИНГ<br>ИВНЯНСКИЙ</span></div>
<div class="td l" style="left:149px;width:74.5px;top:549.0px"><span class="t">СОЯ</span></div>
<div class="td l" style="left:223.5px;width:92.0px;top:549.0px"><span class="t">ПФ Соя 2026</span></div>
<div class="td l" style="left:315.5px;width:123.0px;top:549.0px"><span class="t">СОЯ АХИ ИВНЯ 2026 ЗЕРНО</span></div>
<div class="td l" style="left:438.5px;width:38.0px;top:549.0px"><span class="t"><span class="lnk">101-<br>24</span></span></div>
<div class="td l" style="left:476.5px;width:62.0px;top:549.0px"><span class="t">31-1-1-101-<br>24</span></div>
<div class="td l" style="left:538.5px;width:83.79999999999995px;top:549.0px"><span class="t">31-1-1-101-24 / 1 -<br>2026</span></div>
<div class="td r" style="left:622.3px;width:146.10000000000002px;top:549.0px"><span class="t">1</span></div>
<div class="td c" style="left:768.4px;width:67.0px;top:549.0px"><span class="t">19.08.25<svg class="ar" width="13" height="9" viewBox="0 0 11 9" preserveAspectRatio="none"><path d="M0.5 1.6H7.5" fill="none" stroke="#6a9ee0" stroke-width="0.75"/><path d="M7.5 1.3V8M4.9 5.4L7.5 8L10.1 5.4" fill="none" stroke="#3a80d8" stroke-width="0.9"/></svg></span></div>
<div class="td c" style="left:835.4px;width:68.10000000000002px;top:549.0px"><span class="t">26.11.25<svg class="ar" width="13" height="9" viewBox="0 0 11 9" preserveAspectRatio="none"><path d="M0.5 1.6H7.5" fill="none" stroke="#6a9ee0" stroke-width="0.75"/><path d="M7.5 1.3V8M4.9 5.4L7.5 8L10.1 5.4" fill="none" stroke="#3a80d8" stroke-width="0.9"/></svg></span></div>
<div class="td c" style="left:903.5px;width:71.5px;top:549.0px"><span class="t">19.08.25</span></div>
<div class="td c" style="left:975px;width:86.20000000000005px;top:549.0px"><span class="t">30.09.26</span></div>
<div class="td r" style="left:1061.2px;width:72.09999999999991px;top:549.0px"><span class="t">121</span></div>
<div class="td r" style="left:1133.3px;width:90.29999999999995px;top:549.0px"><span class="t">121</span></div>
<div class="td r" style="left:1223.6px;width:80.0px;top:549.0px"><span class="t">121,28</span></div>
<div class="td r" style="left:1303.6px;width:70.10000000000014px;top:549.0px"><span class="t">121,31</span></div>
<div class="td l" style="left:1373.7px;width:78.59999999999991px;top:549.0px"><span class="t">(ЗГ) АХИ<br>Ивня_Поля</span></div>
<div class="td l" style="left:1452.3px;width:112.20000000000005px;top:549.0px"><span class="t">ООО АГРОХОЛДИНГ<br>ИВНЯНСКИЙ</span></div>
<div class="td l" style="left:1564.5px;width:79.79999999999995px;top:549.0px"><span class="t">ИВНЯ</span></div>
<div class="td l" style="left:1644.3px;width:112.10000000000014px;top:549.0px"><span class="t">ООО АГРОХОЛДИНГ<br>ИВНЯНСКИЙ</span></div>
<div class="td l" style="left:149px;width:74.5px;top:580.0px"><span class="t">СОЯ</span></div>
<div class="td l" style="left:223.5px;width:92.0px;top:580.0px"><span class="t">ПФ Соя 2026</span></div>
<div class="td l" style="left:315.5px;width:123.0px;top:580.0px"><span class="t">СОЯ АХИ ИВНЯ 2026 ЗЕРНО</span></div>
<div class="td l" style="left:438.5px;width:38.0px;top:580.0px"><span class="t"><span class="lnk">101-<br>32</span></span></div>
<div class="td l" style="left:476.5px;width:62.0px;top:580.0px"><span class="t">31-1-1-101-<br>32</span></div>
<div class="td l" style="left:538.5px;width:83.79999999999995px;top:580.0px"><span class="t">31-1-1-101-32 / 1 -<br>2026</span></div>
<div class="td r" style="left:622.3px;width:146.10000000000002px;top:580.0px"><span class="t">1</span></div>
<div class="td c" style="left:768.4px;width:67.0px;top:580.0px"><span class="t">27.09.25<svg class="ar" width="13" height="9" viewBox="0 0 11 9" preserveAspectRatio="none"><path d="M0.5 1.6H7.5" fill="none" stroke="#6a9ee0" stroke-width="0.75"/><path d="M7.5 1.3V8M4.9 5.4L7.5 8L10.1 5.4" fill="none" stroke="#3a80d8" stroke-width="0.9"/></svg></span></div>
<div class="td c" style="left:835.4px;width:68.10000000000002px;top:580.0px"><span class="t">20.10.25<svg class="ar" width="13" height="9" viewBox="0 0 11 9" preserveAspectRatio="none"><path d="M0.5 1.6H7.5" fill="none" stroke="#6a9ee0" stroke-width="0.75"/><path d="M7.5 1.3V8M4.9 5.4L7.5 8L10.1 5.4" fill="none" stroke="#3a80d8" stroke-width="0.9"/></svg></span></div>
<div class="td c" style="left:903.5px;width:71.5px;top:580.0px"><span class="t">27.09.25</span></div>
<div class="td c" style="left:975px;width:86.20000000000005px;top:580.0px"><span class="t">30.09.26</span></div>
<div class="td r" style="left:1061.2px;width:72.09999999999991px;top:580.0px"><span class="t">120</span></div>
<div class="td r" style="left:1133.3px;width:90.29999999999995px;top:580.0px"><span class="t">120</span></div>
<div class="td r" style="left:1223.6px;width:80.0px;top:580.0px"><span class="t">120,41</span></div>
<div class="td r" style="left:1303.6px;width:70.10000000000014px;top:580.0px"><span class="t">120,43</span></div>
<div class="td l" style="left:1373.7px;width:78.59999999999991px;top:580.0px"><span class="t">(ЗГ) АХИ<br>Ивня_Поля</span></div>
<div class="td l" style="left:1452.3px;width:112.20000000000005px;top:580.0px"><span class="t">ООО АГРОХОЛДИНГ<br>ИВНЯНСКИЙ</span></div>
<div class="td l" style="left:1564.5px;width:79.79999999999995px;top:580.0px"><span class="t">ИВНЯ</span></div>
<div class="td l" style="left:1644.3px;width:112.10000000000014px;top:580.0px"><span class="t">ООО АГРОХОЛДИНГ<br>ИВНЯНСКИЙ</span></div>
<div class="td l" style="left:149px;width:74.5px;top:611.0px"><span class="t">КУКУРУЗА</span></div>
<div class="td l" style="left:223.5px;width:92.0px;top:611.0px"><span class="t">ПФ Кукуруза на<br>зерно 2026</span></div>
<div class="td l" style="left:315.5px;width:123.0px;top:611.0px"><span class="t">КУКУРУЗА АХИ ИВНЯ 2026<br>ЗЕРНО</span></div>
<div class="td l" style="left:438.5px;width:38.0px;top:611.0px"><span class="t"><span class="lnk">101-<br>33</span></span></div>
<div class="td l" style="left:476.5px;width:62.0px;top:611.0px"><span class="t">31-1-1-101-<br>33</span></div>
<div class="td l" style="left:538.5px;width:83.79999999999995px;top:611.0px"><span class="t">31-1-1-101-33 / 1 -<br>2026</span></div>
<div class="td r" style="left:622.3px;width:146.10000000000002px;top:611.0px"><span class="t">1</span></div>
<div class="td c" style="left:768.4px;width:67.0px;top:611.0px"><span class="t">09.08.25<svg class="ar" width="13" height="9" viewBox="0 0 11 9" preserveAspectRatio="none"><path d="M0.5 1.6H7.5" fill="none" stroke="#6a9ee0" stroke-width="0.75"/><path d="M7.5 1.3V8M4.9 5.4L7.5 8L10.1 5.4" fill="none" stroke="#3a80d8" stroke-width="0.9"/></svg></span></div>
<div class="td c" style="left:835.4px;width:68.10000000000002px;top:611.0px"><span class="t">14.12.25<svg class="ar" width="13" height="9" viewBox="0 0 11 9" preserveAspectRatio="none"><path d="M0.5 1.6H7.5" fill="none" stroke="#6a9ee0" stroke-width="0.75"/><path d="M7.5 1.3V8M4.9 5.4L7.5 8L10.1 5.4" fill="none" stroke="#3a80d8" stroke-width="0.9"/></svg></span></div>
<div class="td c" style="left:903.5px;width:71.5px;top:611.0px"><span class="t">09.12.25</span></div>
<div class="td c" style="left:975px;width:86.20000000000005px;top:611.0px"><span class="t">31.12.26</span></div>
<div class="td r" style="left:1061.2px;width:72.09999999999991px;top:611.0px"><span class="t">129</span></div>
<div class="td r" style="left:1133.3px;width:90.29999999999995px;top:611.0px"><span class="t">129</span></div>
<div class="td r" style="left:1223.6px;width:80.0px;top:611.0px"><span class="t">129,13</span></div>
<div class="td r" style="left:1303.6px;width:70.10000000000014px;top:611.0px"><span class="t">129,5</span></div>
<div class="td l" style="left:1373.7px;width:78.59999999999991px;top:611.0px"><span class="t">(ЗГ) АХИ<br>Ивня_Поля</span></div>
<div class="td l" style="left:1452.3px;width:112.20000000000005px;top:611.0px"><span class="t">ООО АГРОХОЛДИНГ<br>ИВНЯНСКИЙ</span></div>
<div class="td l" style="left:1564.5px;width:79.79999999999995px;top:611.0px"><span class="t">ИВНЯ</span></div>
<div class="td l" style="left:1644.3px;width:112.10000000000014px;top:611.0px"><span class="t">ООО АГРОХОЛДИНГ<br>ИВНЯНСКИЙ</span></div>
<div class="td l" style="left:223.5px;width:92.0px;top:642.0px"><span class="t">ПФ Пшеница озимая<br>ЗГ 2026</span></div>
<div class="td l" style="left:438.5px;width:38.0px;top:642.0px"><span class="t"><span class="lnk">102-1</span></span></div>
<div class="td l" style="left:476.5px;width:62.0px;top:642.0px"><span class="t">31-1-1-102-1</span></div>
<div class="td r" style="left:622.3px;width:146.10000000000002px;top:642.0px"><span class="t">0</span></div>
<div class="td c" style="left:768.4px;width:67.0px;top:642.0px"><span class="t">22.09.25<svg class="ar" width="13" height="9" viewBox="0 0 11 9" preserveAspectRatio="none"><path d="M0.5 1.6H7.5" fill="none" stroke="#6a9ee0" stroke-width="0.75"/><path d="M7.5 1.3V8M4.9 5.4L7.5 8L10.1 5.4" fill="none" stroke="#3a80d8" stroke-width="0.9"/></svg></span></div>
<div class="td c" style="left:835.4px;width:68.10000000000002px;top:642.0px"><span class="t">27.09.25<svg class="ar" width="13" height="9" viewBox="0 0 11 9" preserveAspectRatio="none"><path d="M0.5 1.6H7.5" fill="none" stroke="#6a9ee0" stroke-width="0.75"/><path d="M7.5 1.3V8M4.9 5.4L7.5 8L10.1 5.4" fill="none" stroke="#3a80d8" stroke-width="0.9"/></svg></span></div>
<div class="td r" style="left:1061.2px;width:72.09999999999991px;top:642.0px"><span class="t">345</span></div>
<div class="td r" style="left:1223.6px;width:80.0px;top:642.0px"><span class="t">345,34</span></div>
<div class="td r" style="left:1303.6px;width:70.10000000000014px;top:642.0px"><span class="t">345,39</span></div>
<div class="td l" style="left:1373.7px;width:78.59999999999991px;top:642.0px"><span class="t">(ЗГ) АХИ<br>Ивня_Поля</span></div>
<div class="td l" style="left:1452.3px;width:112.20000000000005px;top:642.0px"><span class="t">ООО АГРОХОЛДИНГ<br>ИВНЯНСКИЙ</span></div>
<div class="td l" style="left:1564.5px;width:79.79999999999995px;top:642.0px"><span class="t">ИВНЯ</span></div>
<div class="td l" style="left:1644.3px;width:112.10000000000014px;top:642.0px"><span class="t">ООО АГРОХОЛДИНГ<br>ИВНЯНСКИЙ</span></div>
<div class="td l" style="left:149px;width:74.5px;top:673.0px"><span class="t">ПШЕНИЦА<br>ОЗИМАЯ</span></div>
<div class="td l" style="left:223.5px;width:92.0px;top:673.0px"><span class="t">ПФ Пшеница озимая<br>ЗГ 2026</span></div>
<div class="td l" style="left:315.5px;width:123.0px;top:673.0px"><span class="t">ПОБЕДА 75#ЭС АХИ ИВНЯ<br>2026 СЕМЕНА</span></div>
<div class="td l" style="left:438.5px;width:38.0px;top:673.0px"><span class="t"><span class="lnk">102-3</span></span></div>
<div class="td l" style="left:476.5px;width:62.0px;top:673.0px"><span class="t">31-1-1-102-3</span></div>
<div class="td l" style="left:538.5px;width:83.79999999999995px;top:673.0px"><span class="t">31-1-1-102-3 / 1 -<br>2026</span></div>
<div class="td r" style="left:622.3px;width:146.10000000000002px;top:673.0px"><span class="t">1</span></div>
<div class="td c" style="left:768.4px;width:67.0px;top:673.0px"><span class="t">21.09.25<svg class="ar" width="13" height="9" viewBox="0 0 11 9" preserveAspectRatio="none"><path d="M0.5 1.6H7.5" fill="none" stroke="#6a9ee0" stroke-width="0.75"/><path d="M7.5 1.3V8M4.9 5.4L7.5 8L10.1 5.4" fill="none" stroke="#3a80d8" stroke-width="0.9"/></svg></span></div>
<div class="td c" style="left:835.4px;width:68.10000000000002px;top:673.0px"><span class="t">25.09.25<svg class="ar" width="13" height="9" viewBox="0 0 11 9" preserveAspectRatio="none"><path d="M0.5 1.6H7.5" fill="none" stroke="#6a9ee0" stroke-width="0.75"/><path d="M7.5 1.3V8M4.9 5.4L7.5 8L10.1 5.4" fill="none" stroke="#3a80d8" stroke-width="0.9"/></svg></span></div>
<div class="td c" style="left:903.5px;width:71.5px;top:673.0px"><span class="t">21.09.25</span></div>
<div class="td c" style="left:975px;width:86.20000000000005px;top:673.0px"><span class="t">31.08.26</span></div>
<div class="td r" style="left:1061.2px;width:72.09999999999991px;top:673.0px"><span class="t">139</span></div>
<div class="td r" style="left:1133.3px;width:90.29999999999995px;top:673.0px"><span class="t">139</span></div>
<div class="td r" style="left:1223.6px;width:80.0px;top:673.0px"><span class="t">139,33</span></div>
<div class="td r" style="left:1303.6px;width:70.10000000000014px;top:673.0px"><span class="t">139,35</span></div>
<div class="td l" style="left:1373.7px;width:78.59999999999991px;top:673.0px"><span class="t">(ЗГ) АХИ<br>Ивня_Поля</span></div>
<div class="td l" style="left:1452.3px;width:112.20000000000005px;top:673.0px"><span class="t">ООО АГРОХОЛДИНГ<br>ИВНЯНСКИЙ</span></div>
<div class="td l" style="left:1564.5px;width:79.79999999999995px;top:673.0px"><span class="t">ИВНЯ</span></div>
<div class="td l" style="left:1644.3px;width:112.10000000000014px;top:673.0px"><span class="t">ООО АГРОХОЛДИНГ<br>ИВНЯНСКИЙ</span></div>
<div class="td l" style="left:149px;width:74.5px;top:704.0px"><span class="t">ПШЕНИЦА<br>ОЗИМАЯ</span></div>
<div class="td l" style="left:223.5px;width:92.0px;top:704.0px"><span class="t">ПФ Пшеница озимая<br>ЗГ 2026</span></div>
<div class="td l" style="left:315.5px;width:123.0px;top:704.0px"><span class="t">ФЁДОР#ЭС АХИ ИВНЯ 2026<br>СЕМЕНА</span></div>
<div class="td l" style="left:438.5px;width:38.0px;top:704.0px"><span class="t"><span class="lnk">102-5</span></span></div>
<div class="td l" style="left:476.5px;width:62.0px;top:704.0px"><span class="t">31-1-1-102-5</span></div>
<div class="td l" style="left:538.5px;width:83.79999999999995px;top:704.0px"><span class="t">31-1-1-102-5 / 1 -<br>2026</span></div>
<div class="td r" style="left:622.3px;width:146.10000000000002px;top:704.0px"><span class="t">1</span></div>
<div class="td c" style="left:768.4px;width:67.0px;top:704.0px"><span class="t">16.09.25<svg class="ar" width="13" height="9" viewBox="0 0 11 9" preserveAspectRatio="none"><path d="M0.5 1.6H7.5" fill="none" stroke="#6a9ee0" stroke-width="0.75"/><path d="M7.5 1.3V8M4.9 5.4L7.5 8L10.1 5.4" fill="none" stroke="#3a80d8" stroke-width="0.9"/></svg></span></div>
<div class="td c" style="left:835.4px;width:68.10000000000002px;top:704.0px"><span class="t">19.09.25<svg class="ar" width="13" height="9" viewBox="0 0 11 9" preserveAspectRatio="none"><path d="M0.5 1.6H7.5" fill="none" stroke="#6a9ee0" stroke-width="0.75"/><path d="M7.5 1.3V8M4.9 5.4L7.5 8L10.1 5.4" fill="none" stroke="#3a80d8" stroke-width="0.9"/></svg></span></div>
<div class="td c" style="left:903.5px;width:71.5px;top:704.0px"><span class="t">16.09.25</span></div>
<div class="td c" style="left:975px;width:86.20000000000005px;top:704.0px"><span class="t">31.08.26</span></div>
<div class="td r" style="left:1061.2px;width:72.09999999999991px;top:704.0px"><span class="t">267</span></div>
<div class="td r" style="left:1133.3px;width:90.29999999999995px;top:704.0px"><span class="t">267</span></div>
<div class="td r" style="left:1223.6px;width:80.0px;top:704.0px"><span class="t">266,46</span></div>
<div class="td r" style="left:1303.6px;width:70.10000000000014px;top:704.0px"><span class="t">266,49</span></div>
<div class="td l" style="left:1373.7px;width:78.59999999999991px;top:704.0px"><span class="t">(ЗГ) АХИ<br>Ивня_Поля</span></div>
<div class="td l" style="left:1452.3px;width:112.20000000000005px;top:704.0px"><span class="t">ООО АГРОХОЛДИНГ<br>ИВНЯНСКИЙ</span></div>
<div class="td l" style="left:1564.5px;width:79.79999999999995px;top:704.0px"><span class="t">ИВНЯ</span></div>
<div class="td l" style="left:1644.3px;width:112.10000000000014px;top:704.0px"><span class="t">ООО АГРОХОЛДИНГ<br>ИВНЯНСКИЙ</span></div>
<div class="td l" style="left:149px;width:74.5px;top:735.0px"><span class="t">ПШЕНИЦА<br>ОЗИМАЯ</span></div>
<div class="td l" style="left:223.5px;width:92.0px;top:735.0px"><span class="t">ПФ Пшеница озимая<br>ЗГ 2026</span></div>
<div class="td l" style="left:315.5px;width:123.0px;top:735.0px"><span class="t">ФЁДОР#ЭС АХИ ИВНЯ 2026<br>ЗЕРНО</span></div>
<div class="td l" style="left:438.5px;width:38.0px;top:735.0px"><span class="t"><span class="lnk">102-6</span></span></div>
<div class="td l" style="left:476.5px;width:62.0px;top:735.0px"><span class="t">31-1-1-102-6</span></div>
<div class="td l" style="left:538.5px;width:83.79999999999995px;top:735.0px"><span class="t">31-1-1-102-6 / 1 -<br>2026</span></div>
<div class="td r" style="left:622.3px;width:146.10000000000002px;top:735.0px"><span class="t">1</span></div>
<div class="td c" style="left:768.4px;width:67.0px;top:735.0px"><span class="t">19.09.25<svg class="ar" width="13" height="9" viewBox="0 0 11 9" preserveAspectRatio="none"><path d="M0.5 1.6H7.5" fill="none" stroke="#6a9ee0" stroke-width="0.75"/><path d="M7.5 1.3V8M4.9 5.4L7.5 8L10.1 5.4" fill="none" stroke="#3a80d8" stroke-width="0.9"/></svg></span></div>
<div class="td c" style="left:835.4px;width:68.10000000000002px;top:735.0px"><span class="t">22.09.25<svg class="ar" width="13" height="9" viewBox="0 0 11 9" preserveAspectRatio="none"><path d="M0.5 1.6H7.5" fill="none" stroke="#6a9ee0" stroke-width="0.75"/><path d="M7.5 1.3V8M4.9 5.4L7.5 8L10.1 5.4" fill="none" stroke="#3a80d8" stroke-width="0.9"/></svg></span></div>
<div class="td c" style="left:903.5px;width:71.5px;top:735.0px"><span class="t">19.09.25</span></div>
<div class="td c" style="left:975px;width:86.20000000000005px;top:735.0px"><span class="t">31.08.26</span></div>
<div class="td r" style="left:1061.2px;width:72.09999999999991px;top:735.0px"><span class="t">101</span></div>
<div class="td r" style="left:1133.3px;width:90.29999999999995px;top:735.0px"><span class="t">101</span></div>
<div class="td r" style="left:1223.6px;width:80.0px;top:735.0px"><span class="t">101,14</span></div>
<div class="td r" style="left:1303.6px;width:70.10000000000014px;top:735.0px"><span class="t">101,16</span></div>
<div class="td l" style="left:1373.7px;width:78.59999999999991px;top:735.0px"><span class="t">(ЗГ) АХИ<br>Ивня_Поля</span></div>
<div class="td l" style="left:1452.3px;width:112.20000000000005px;top:735.0px"><span class="t">ООО АГРОХОЛДИНГ<br>ИВНЯНСКИЙ</span></div>
<div class="td l" style="left:1564.5px;width:79.79999999999995px;top:735.0px"><span class="t">ИВНЯ</span></div>
<div class="td l" style="left:1644.3px;width:112.10000000000014px;top:735.0px"><span class="t">ООО АГРОХОЛДИНГ<br>ИВНЯНСКИЙ</span></div>
<div class="td l" style="left:149px;width:74.5px;top:766.0px"><span class="t">ПШЕНИЦА<br>ОЗИМАЯ</span></div>
<div class="td l" style="left:223.5px;width:92.0px;top:766.0px"><span class="t">ПФ Пшеница озимая<br>ЗГ 2026</span></div>
<div class="td l" style="left:315.5px;width:123.0px;top:766.0px"><span class="t">ФЁДОР#ЭС АХИ ИВНЯ 2026<br>СЕМЕНА</span></div>
<div class="td l" style="left:438.5px;width:38.0px;top:766.0px"><span class="t"><span class="lnk">102-7</span></span></div>
<div class="td l" style="left:476.5px;width:62.0px;top:766.0px"><span class="t">31-1-1-102-7</span></div>
<div class="td l" style="left:538.5px;width:83.79999999999995px;top:766.0px"><span class="t">31-1-1-102-7 / 1 -<br>2026</span></div>
<div class="td r" style="left:622.3px;width:146.10000000000002px;top:766.0px"><span class="t">1</span></div>
<div class="td c" style="left:768.4px;width:67.0px;top:766.0px"><span class="t">17.09.25<svg class="ar" width="13" height="9" viewBox="0 0 11 9" preserveAspectRatio="none"><path d="M0.5 1.6H7.5" fill="none" stroke="#6a9ee0" stroke-width="0.75"/><path d="M7.5 1.3V8M4.9 5.4L7.5 8L10.1 5.4" fill="none" stroke="#3a80d8" stroke-width="0.9"/></svg></span></div>
<div class="td c" style="left:835.4px;width:68.10000000000002px;top:766.0px"><span class="t">21.09.25<svg class="ar" width="13" height="9" viewBox="0 0 11 9" preserveAspectRatio="none"><path d="M0.5 1.6H7.5" fill="none" stroke="#6a9ee0" stroke-width="0.75"/><path d="M7.5 1.3V8M4.9 5.4L7.5 8L10.1 5.4" fill="none" stroke="#3a80d8" stroke-width="0.9"/></svg></span></div>
<div class="td c" style="left:903.5px;width:71.5px;top:766.0px"><span class="t">17.09.25</span></div>
<div class="td c" style="left:975px;width:86.20000000000005px;top:766.0px"><span class="t">31.08.26</span></div>
<div class="td r" style="left:1061.2px;width:72.09999999999991px;top:766.0px"><span class="t">155</span></div>
<div class="td r" style="left:1133.3px;width:90.29999999999995px;top:766.0px"><span class="t">155</span></div>
<div class="td r" style="left:1223.6px;width:80.0px;top:766.0px"><span class="t">155,14</span></div>
<div class="td r" style="left:1303.6px;width:70.10000000000014px;top:766.0px"><span class="t">155,17</span></div>
<div class="td l" style="left:1373.7px;width:78.59999999999991px;top:766.0px"><span class="t">(ЗГ) АХИ<br>Ивня_Поля</span></div>
<div class="td l" style="left:1452.3px;width:112.20000000000005px;top:766.0px"><span class="t">ООО АГРОХОЛДИНГ<br>ИВНЯНСКИЙ</span></div>
<div class="td l" style="left:1564.5px;width:79.79999999999995px;top:766.0px"><span class="t">ИВНЯ</span></div>
<div class="td l" style="left:1644.3px;width:112.10000000000014px;top:766.0px"><span class="t">ООО АГРОХОЛДИНГ<br>ИВНЯНСКИЙ</span></div>
<div class="td l" style="left:149px;width:74.5px;top:797.0px"><span class="t">СОЯ</span></div>
<div class="td l" style="left:223.5px;width:92.0px;top:797.0px"><span class="t">ПФ Соя 2026</span></div>
<div class="td l" style="left:315.5px;width:123.0px;top:797.0px"><span class="t">СОЯ АХИ ИВНЯ 2026 ЗЕРНО</span></div>
<div class="td l" style="left:438.5px;width:38.0px;top:797.0px"><span class="t"><span class="lnk">102-<br>12</span></span></div>
<div class="td l" style="left:476.5px;width:62.0px;top:797.0px"><span class="t">31-1-1-102-<br>12</span></div>
<div class="td l" style="left:538.5px;width:83.79999999999995px;top:797.0px"><span class="t">31-1-1-102-12 / 1 -<br>2026</span></div>
<div class="td r" style="left:622.3px;width:146.10000000000002px;top:797.0px"><span class="t">1</span></div>
<div class="td c" style="left:768.4px;width:67.0px;top:797.0px"><span class="t">10.08.25<svg class="ar" width="13" height="9" viewBox="0 0 11 9" preserveAspectRatio="none"><path d="M0.5 1.6H7.5" fill="none" stroke="#6a9ee0" stroke-width="0.75"/><path d="M7.5 1.3V8M4.9 5.4L7.5 8L10.1 5.4" fill="none" stroke="#3a80d8" stroke-width="0.9"/></svg></span></div>
<div class="td c" style="left:835.4px;width:68.10000000000002px;top:797.0px"><span class="t">13.09.25<svg class="ar" width="13" height="9" viewBox="0 0 11 9" preserveAspectRatio="none"><path d="M0.5 1.6H7.5" fill="none" stroke="#6a9ee0" stroke-width="0.75"/><path d="M7.5 1.3V8M4.9 5.4L7.5 8L10.1 5.4" fill="none" stroke="#3a80d8" stroke-width="0.9"/></svg></span></div>
<div class="td c" style="left:903.5px;width:71.5px;top:797.0px"><span class="t">10.08.25</span></div>
<div class="td c" style="left:975px;width:86.20000000000005px;top:797.0px"><span class="t">30.09.26</span></div>
<div class="td r" style="left:1061.2px;width:72.09999999999991px;top:797.0px"><span class="t">109</span></div>
<div class="td r" style="left:1133.3px;width:90.29999999999995px;top:797.0px"><span class="t">109</span></div>
<div class="td r" style="left:1223.6px;width:80.0px;top:797.0px"><span class="t">109,46</span></div>
<div class="td r" style="left:1303.6px;width:70.10000000000014px;top:797.0px"><span class="t">109,47</span></div>
<div class="td l" style="left:1373.7px;width:78.59999999999991px;top:797.0px"><span class="t">(ЗГ) АХИ<br>Ивня_Поля</span></div>
<div class="td l" style="left:1452.3px;width:112.20000000000005px;top:797.0px"><span class="t">ООО АГРОХОЛДИНГ<br>ИВНЯНСКИЙ</span></div>
<div class="td l" style="left:1564.5px;width:79.79999999999995px;top:797.0px"><span class="t">ИВНЯ</span></div>
<div class="td l" style="left:1644.3px;width:112.10000000000014px;top:797.0px"><span class="t">ООО АГРОХОЛДИНГ<br>ИВНЯНСКИЙ</span></div>
<div class="td l" style="left:149px;width:74.5px;top:828.0px"><span class="t">КУКУРУЗА</span></div>
<div class="td l" style="left:223.5px;width:92.0px;top:828.0px"><span class="t">ПФ Кукуруза на<br>зерно 2026</span></div>
<div class="td l" style="left:315.5px;width:123.0px;top:828.0px"><span class="t">КУКУРУЗА АХИ ИВНЯ 2026<br>ЗЕРНО</span></div>
<div class="td l" style="left:438.5px;width:38.0px;top:828.0px"><span class="t"><span class="lnk">102-<br>17</span></span></div>
<div class="td l" style="left:476.5px;width:62.0px;top:828.0px"><span class="t">31-1-1-102-<br>17</span></div>
<div class="td l" style="left:538.5px;width:83.79999999999995px;top:828.0px"><span class="t">31-1-1-102-17 / 1 -<br>2026</span></div>
<div class="td r" style="left:622.3px;width:146.10000000000002px;top:828.0px"><span class="t">1</span></div>
<div class="td c" style="left:768.4px;width:67.0px;top:828.0px"><span class="t">18.08.25<svg class="ar" width="13" height="9" viewBox="0 0 11 9" preserveAspectRatio="none"><path d="M0.5 1.6H7.5" fill="none" stroke="#6a9ee0" stroke-width="0.75"/><path d="M7.5 1.3V8M4.9 5.4L7.5 8L10.1 5.4" fill="none" stroke="#3a80d8" stroke-width="0.9"/></svg></span></div>
<div class="td c" style="left:835.4px;width:68.10000000000002px;top:828.0px"><span class="t">13.10.25<svg class="ar" width="13" height="9" viewBox="0 0 11 9" preserveAspectRatio="none"><path d="M0.5 1.6H7.5" fill="none" stroke="#6a9ee0" stroke-width="0.75"/><path d="M7.5 1.3V8M4.9 5.4L7.5 8L10.1 5.4" fill="none" stroke="#3a80d8" stroke-width="0.9"/></svg></span></div>
<div class="td c" style="left:903.5px;width:71.5px;top:828.0px"><span class="t">18.08.25</span></div>
<div class="td c" style="left:975px;width:86.20000000000005px;top:828.0px"><span class="t">31.12.26</span></div>
<div class="td r" style="left:1061.2px;width:72.09999999999991px;top:828.0px"><span class="t">83</span></div>
<div class="td r" style="left:1133.3px;width:90.29999999999995px;top:828.0px"><span class="t">83</span></div>
<div class="td r" style="left:1223.6px;width:80.0px;top:828.0px"><span class="t">82,76</span></div>
<div class="td r" style="left:1303.6px;width:70.10000000000014px;top:828.0px"><span class="t">82,77</span></div>
<div class="td l" style="left:1373.7px;width:78.59999999999991px;top:828.0px"><span class="t">(ЗГ) АХИ<br>Ивня_Поля</span></div>
<div class="td l" style="left:1452.3px;width:112.20000000000005px;top:828.0px"><span class="t">ООО АГРОХОЛДИНГ<br>ИВНЯНСКИЙ</span></div>
<div class="td l" style="left:1564.5px;width:79.79999999999995px;top:828.0px"><span class="t">ИВНЯ</span></div>
<div class="td l" style="left:1644.3px;width:112.10000000000014px;top:828.0px"><span class="t">ООО АГРОХОЛДИНГ<br>ИВНЯНСКИЙ</span></div>
<div class="abs" style="left:0;top:0;width:5px;height:5px;background:radial-gradient(circle at 0 0,#c5d8f7 0,rgba(197,216,247,0) 4px)"></div>
<div class="abs" style="left:0;top:845px;width:5px;height:5px;background:radial-gradient(circle at 0 100%,#9a9a9a 0,rgba(154,154,154,0) 4px)"></div>
<div class="abs" style="left:0;top:88px;width:1842px;height:2px;background:linear-gradient(rgba(0,0,0,.16),rgba(0,0,0,0))"></div>
</body></html>
